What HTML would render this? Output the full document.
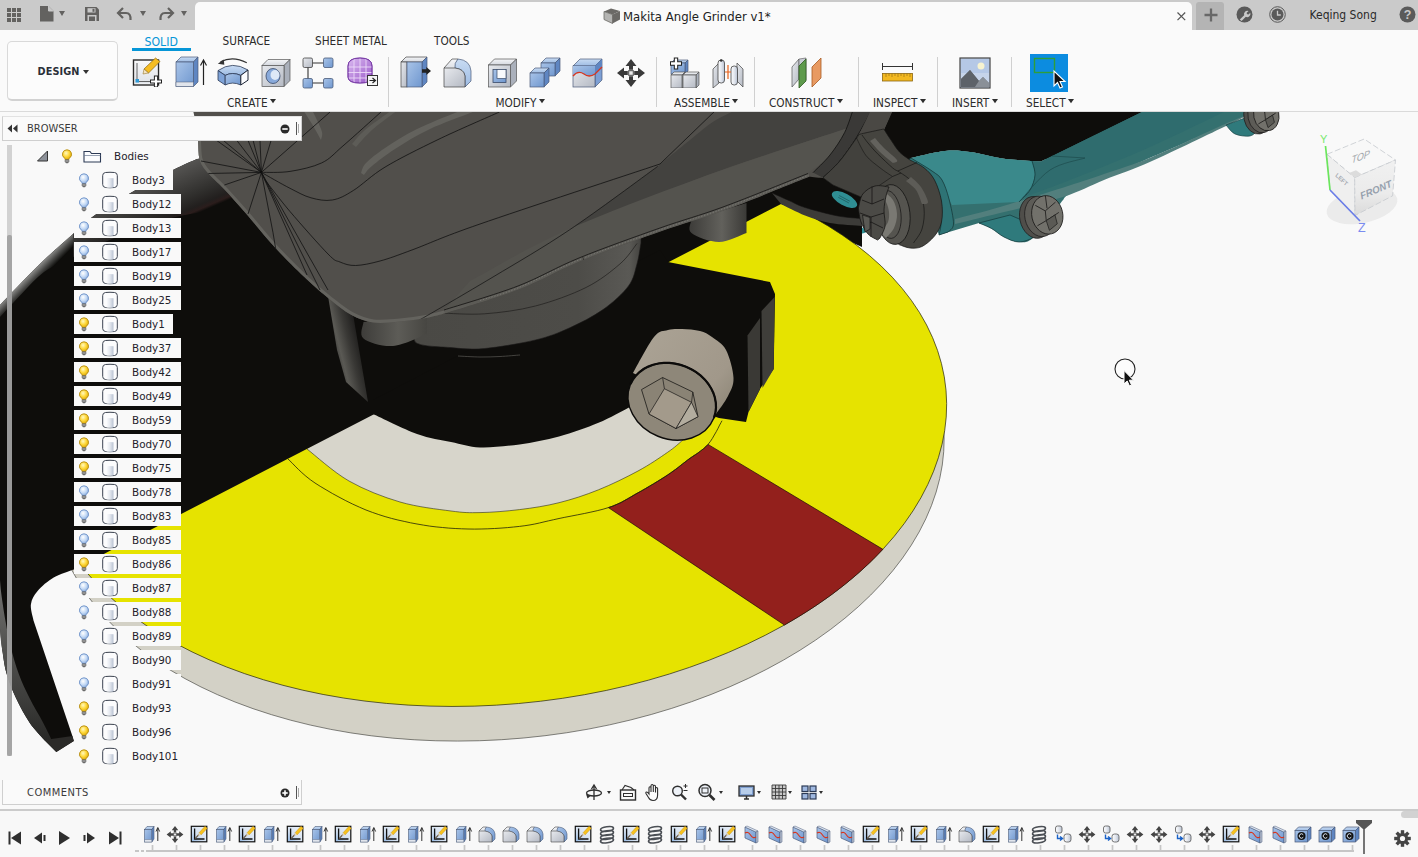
<!DOCTYPE html>
<html lang="en">
<head>
<meta charset="utf-8">
<title>Makita Angle Grinder v1*</title>
<style>
*{box-sizing:border-box;margin:0;padding:0}
html,body{width:1418px;height:857px;overflow:hidden;background:#f9f9f9}
body{position:relative;font-family:"DejaVu Sans Condensed","Liberation Sans",sans-serif;font-size:11px;color:#2e2e2e}
.abs{position:absolute}
#topbar{left:0;top:0;width:1418px;height:30px;background:#cacaca}
#tab{left:195px;top:2px;width:997px;height:28px;background:#fafafa;border-radius:5px 5px 0 0}
#toolbar{left:0;top:30px;width:1418px;height:82px;background:#fafafa}
#tbline{left:0;top:111px;width:1418px;height:1px;background:#dadada}
#design{left:7px;top:41px;width:111px;height:60px;border:1px solid #d9d9d9;border-bottom:2px solid #d2d2d2;border-radius:5px;background:#fcfcfc}
.t{position:absolute;white-space:nowrap;line-height:1}
.tabl{font-size:11.7px;top:36.5px;color:#2b2b2b}
.grp{font-size:11.7px;top:98px;color:#2b2b2b;height:12px;line-height:12px}
.dd{display:inline-block;margin-left:2.5px;vertical-align:3.4px}
.sep{position:absolute;top:57px;width:1px;height:50px;background:#d0d0d0}
.tri{position:absolute;width:0;height:0;border-left:2.8px solid transparent;border-right:2.8px solid transparent;border-top:3.8px solid #333}
#canvas{left:0;top:112px;width:1418px;height:697px;overflow:hidden}
#bhead{left:2px;top:116px;width:300px;height:25px;background:#fafafa;border:1px solid #cfcfcf;border-top-color:#e2e2e2}
#chead{left:2px;top:780px;width:300px;height:25px;background:#fafafa;border:1px solid #cfcfcf;border-top:none}
.row{position:absolute;left:74px;height:20px;background:#f9f9f9}
.lbl{position:absolute;left:132px;font-family:"DejaVu Sans","Liberation Sans",sans-serif;font-size:10.4px;color:#1f222b;line-height:1;white-space:nowrap}
#tline{left:0;top:809px;width:1418px;height:2px;background:#cbcbcb}
#timeline{left:0;top:811px;width:1418px;height:47px;background:#f8f8f8}
</style>
</head>
<body>
<svg width="0" height="0" style="position:absolute"><defs>
<linearGradient id="bl" x1="0" y1="0" x2="1" y2="1"><stop offset="0" stop-color="#a9c4e8"/><stop offset="1" stop-color="#6f97cf"/></linearGradient>
<linearGradient id="blt" x1="0" y1="0" x2="0" y2="1"><stop offset="0" stop-color="#c9dcf3"/><stop offset="1" stop-color="#9dbbe3"/></linearGradient>
<linearGradient id="gy" x1="0" y1="0" x2="1" y2="1"><stop offset="0" stop-color="#e8eaee"/><stop offset="1" stop-color="#b4b9c3"/></linearGradient>
<linearGradient id="gyt" x1="0" y1="0" x2="0" y2="1"><stop offset="0" stop-color="#f4f5f7"/><stop offset="1" stop-color="#d4d8df"/></linearGradient>
<linearGradient id="cyl" x1="0" y1="0" x2="1" y2="0"><stop offset="0" stop-color="#fdfdfe"/><stop offset=".5" stop-color="#e4e8ef"/><stop offset="1" stop-color="#b9c2d2"/></linearGradient>
<radialGradient id="bulbY" cx=".4" cy=".35" r=".7"><stop offset="0" stop-color="#fff9c0"/><stop offset=".5" stop-color="#ffd83a"/><stop offset="1" stop-color="#d9a400"/></radialGradient>
<radialGradient id="bulbB" cx=".4" cy=".35" r=".7"><stop offset="0" stop-color="#ffffff"/><stop offset=".55" stop-color="#c3d9f5"/><stop offset="1" stop-color="#7fa3d8"/></radialGradient>
<linearGradient id="skf" x1="1" y1="0" x2="0" y2="1"><stop offset="0" stop-color="#f1f5fa"/><stop offset=".6" stop-color="#d3e0f0"/><stop offset="1" stop-color="#8db4e2"/></linearGradient>
<linearGradient id="pur" x1="0" y1="0" x2="1" y2="1"><stop offset="0" stop-color="#d9b8f0"/><stop offset="1" stop-color="#9b59c9"/></linearGradient>
<symbol id="iBulbY" viewBox="0 0 12 15"><path d="M6 .8a4.500 4.500 0 0 0-2.600 8.200c.5.400.7.900.7 1.600h3.800c0-.7.200-1.200.7-1.600A4.500 4.500 0 0 0 6 .8z" fill="url(#bulbY)" stroke="#b48a10" stroke-width=".9"/><rect x="4.100" y="10.700" width="3.800" height="2.600" rx=".6" fill="#9a9a9a" stroke="#555" stroke-width=".6"/><rect x="4.900" y="13.300" width="2.200" height=".9" fill="#555"/></symbol>
<symbol id="iBulbB" viewBox="0 0 12 15"><path d="M6 .8a4.500 4.500 0 0 0-2.600 8.200c.5.400.7.900.7 1.600h3.800c0-.7.200-1.200.7-1.600A4.500 4.500 0 0 0 6 .8z" fill="url(#bulbB)" stroke="#6a8fc6" stroke-width=".9"/><rect x="4.100" y="10.700" width="3.800" height="2.600" rx=".6" fill="#9a9a9a" stroke="#555" stroke-width=".6"/><rect x="4.900" y="13.300" width="2.200" height=".9" fill="#555"/></symbol>
<symbol id="iBody" viewBox="0 0 18 18"><path d="M1.700 4.500Q1.700 1.800 4.500 1.500Q9 1 13.500 1.500Q16.300 1.800 16.300 4.500V13.500Q16.300 16.200 13.500 16.500Q9 17 4.500 16.500Q1.700 16.200 1.700 13.500Z" fill="#fcfcfd" stroke="#3c4350" stroke-width="1"/><path d="M5.300 7.300Q9 6.500 12.500 7.300V16.500Q9 17 5.300 16.500Z" fill="url(#cyl)"/></symbol>
<symbol id="iExt" viewBox="0 0 22 20"><path d="M3 5L6 1.500H14L11.500 5Z" fill="url(#blt)" stroke="#4a5a78" stroke-width=".7"/><path d="M11.500 5L14 1.500V14L11.500 17.500Z" fill="#5f86c2" stroke="#4a5a78" stroke-width=".7"/><rect x="3" y="5" width="8.500" height="12.500" fill="url(#bl)" stroke="#4a5a78" stroke-width=".7"/><path d="M3 15h8.500v2.500H3z" fill="#d7dce6" stroke="#4a5a78" stroke-width=".5"/><path d="M18 17.500V3M15.800 6L18 2.500L20.200 6" stroke="#222" stroke-width="1.100" fill="none"/></symbol>
<symbol id="iSk" viewBox="0 0 20 20"><rect x="1.500" y="2" width="16.500" height="16.500" fill="#fdfdfd" stroke="#1d1d1d" stroke-width="1.400"/><path d="M4.500 15.500L12.500 7.500M4.500 15.500V9.500M4.500 15.500H10.500" stroke="#222" stroke-width="1.300" fill="none"/><path d="M10 8L16.500 1.500L19 3.500L12.500 10.500Z" fill="#f5b81c" stroke="#a26f00" stroke-width=".5"/><rect x="2.200" y="2.700" width="6" height="6" fill="#9fc1ea" opacity=".0"/></symbol>
</defs></svg>
<svg class="abs" style="left:0;top:112px" width="1418" height="697" viewBox="0 112 1418 697">
<defs>
<linearGradient id="gRim" gradientUnits="userSpaceOnUse" x1="190" y1="162" x2="210" y2="208"><stop offset="0" stop-color="#555452"/><stop offset=".3" stop-color="#434240"/><stop offset=".62" stop-color="#302f2d"/><stop offset=".86" stop-color="#221f1e"/><stop offset=".94" stop-color="#2b1d1c"/><stop offset="1" stop-color="#0e0d0b"/></linearGradient>
<linearGradient id="gRimL" gradientUnits="userSpaceOnUse" x1="33" y1="271" x2="41" y2="279"><stop offset="0" stop-color="#8c8c8a"/><stop offset=".5" stop-color="#4a4a48"/><stop offset="1" stop-color="#0e0d0b"/></linearGradient>
<linearGradient id="gStrap" gradientUnits="userSpaceOnUse" x1="0" y1="585" x2="0" y2="745"><stop offset="0" stop-color="#727270"/><stop offset=".35" stop-color="#555553"/><stop offset=".7" stop-color="#3e3e3c"/><stop offset="1" stop-color="#262624"/></linearGradient>
<linearGradient id="gNeck" gradientUnits="userSpaceOnUse" x1="420" y1="300" x2="645" y2="300"><stop offset="0" stop-color="#4a4945"/><stop offset=".7" stop-color="#4d4c48"/><stop offset=".93" stop-color="#5a5955"/><stop offset="1" stop-color="#3c3b38"/></linearGradient>
<linearGradient id="gBossL" gradientUnits="userSpaceOnUse" x1="363" y1="0" x2="427" y2="0"><stop offset="0" stop-color="#3f3e3b"/><stop offset=".55" stop-color="#5d5c57"/><stop offset="1" stop-color="#474642"/></linearGradient>
<linearGradient id="gBossR" gradientUnits="userSpaceOnUse" x1="691" y1="0" x2="747" y2="0"><stop offset="0" stop-color="#3f3e3b"/><stop offset=".55" stop-color="#62615c"/><stop offset="1" stop-color="#3a3936"/></linearGradient>
<linearGradient id="gPil" gradientUnits="userSpaceOnUse" x1="330" y1="350" x2="362" y2="342"><stop offset="0" stop-color="#2c2b29"/><stop offset=".3" stop-color="#5a5954"/><stop offset=".6" stop-color="#3a3936"/><stop offset="1" stop-color="#1a1918"/></linearGradient>
<linearGradient id="gBolt" gradientUnits="userSpaceOnUse" x1="650" y1="330" x2="735" y2="400"><stop offset="0" stop-color="#aaa294"/><stop offset=".75" stop-color="#a1988a"/><stop offset="1" stop-color="#8f8879"/></linearGradient>
<radialGradient id="gScrew" cx=".45" cy=".45" r=".6"><stop offset="0" stop-color="#7b7973"/><stop offset="1" stop-color="#4a4945"/></radialGradient>
<linearGradient id="gCubeT" x1="0" y1="0" x2="1" y2="1"><stop offset="0" stop-color="#fbfbfb"/><stop offset="1" stop-color="#e9e9e9"/></linearGradient>
</defs>
<rect x="0" y="112" width="1418" height="697" fill="#f9f9f9"/>
<path d="M850 110C899.3 110 1114.2 101.4 1146 110C1177.8 118.6 1058.5 152.9 1041 161.5C1034.8 161 1015.8 160.3 1004 158.7C992.2 157.1 979.8 153.3 970 152C960.2 150.7 954.8 150 945 151C935.2 152 916.7 156.8 911 158L905 170L880 150L860 130Z" fill="#0e0d0b"/>
<path d="M911 158C916.7 156.8 935.2 152 945 151C954.8 150 960.2 150.7 970 152C979.8 153.3 992.2 157.1 1004 158.7C1015.8 160.3 1034.8 161 1041 161.5L1146 110L1283 110L1243 117C1240.2 118.3 1242.7 117.7 1226 125C1209.3 132.3 1168.2 150 1143 161C1117.8 172 1088.3 184.5 1075 191C1061.7 197.5 1065 198.5 1063 200C1058.2 206.2 1041.3 230 1034 237C1026.7 244 1024 242 1019 242C1014 242 1008.6 239.2 1004 237C999.4 234.8 995.7 230.8 991.5 228.5C987.3 226.2 981.1 223.9 979 223L939 235Z" fill="#34706f"/>
<path d="M911 158C916.7 156.8 935.2 152 945 151C954.8 150 960.2 150.7 970 152C979.8 153.3 993.7 157.2 1004 158.7C1014.3 160.2 1027.3 160.6 1032 161C1032.5 163.3 1035.3 170.2 1035 175C1034.7 179.8 1032.7 185.5 1030 190C1027.3 194.5 1020.8 200 1019 202L952 205C951.5 204 950.7 203.2 949 199C947.3 194.8 944.8 184.7 942 180C939.2 175.3 937.2 174.7 932 171C926.8 167.3 914.5 160.2 911 158Z" fill="#3a898b"/>
<path d="M1032 161L1041 161.5L1146 110L1228 110C1215 116.2 1175.5 135.7 1150 147C1124.5 158.3 1096.3 169.5 1075 178C1053.7 186.5 1030.8 194.7 1022 198C1023.3 196.7 1027.8 193.8 1030 190C1032.2 186.2 1034.7 179.8 1035 175C1035.3 170.2 1032.5 163.3 1032 161Z" fill="#2f6c6e"/>
<path d="M1259 110C1253.2 112.4 1241.8 116.7 1224 124.5C1206.2 132.3 1172 148.8 1152 157C1132 165.2 1118 169.2 1104 174C1090 178.8 1085.3 180.5 1068 186C1050.7 191.5 1018.8 201.5 1000 207C981.2 212.5 962.5 217 955 219L955 224C962.5 222.2 982 217.5 1000 213C1018 208.5 1045.7 202.5 1063 197C1080.3 191.5 1089.2 186 1104 180C1118.8 174 1131.7 170 1152 161C1172.3 152 1213.7 131.8 1226 126L1243 117.5L1283 110Z" fill="#527f7d"/>
<path d="M1032 161C1032.5 163.3 1035.3 170.2 1035 175C1034.7 179.8 1032.7 185.5 1030 190C1027.3 194.5 1020.8 200 1019 202" fill="none" stroke="#143a3c" stroke-width="0.8"/>
<path d="M1019 202C1024.2 196.7 1039 177.3 1050 170C1061 162.7 1079.2 160 1085 158L1052 156" fill="none" stroke="#1d4a4c" stroke-width="0.7"/>
<path d="M911 158C914.5 160.2 926.8 167.3 932 171C937.2 174.7 939.2 175.3 942 180C944.8 184.7 947.1 191.7 949 199C950.9 206.3 953.7 218.5 953.5 224C953.3 229.5 948.9 230.7 948 232L939 235C939.3 232.8 941.2 228 941 222C940.8 216 939.8 206.3 938 199C936.2 191.7 933.3 183.5 930 178C926.7 172.5 921.7 169 918 166C914.3 163 909.7 161 908 160Z" fill="#2e7375" stroke="#123234" stroke-width="0.7"/>
<path d="M979 223C981.1 223.9 987.3 226.2 991.5 228.5C995.7 230.8 999.4 234.8 1004 237C1008.6 239.2 1014 242 1019 242C1024 242 1030.5 239.3 1034 237C1037.5 234.7 1039 229.5 1040 228L1010 215Z" fill="#2f7a7c" stroke="#14393b" stroke-width="0.7"/>
<path d="M1226 125C1227.5 126.5 1231 132.2 1235 134C1239 135.8 1246.2 136.7 1250 136C1253.8 135.3 1256.7 131 1258 130L1250 116Z" fill="#2f7a7c" stroke="#14393b" stroke-width="0.6"/>
<g transform="translate(1042 216) rotate(-12)"><ellipse cx="-6.9" cy="0" rx="15.5" ry="21.1" fill="#4f4e4a" stroke="#1c1b1a" stroke-width=".7"/><ellipse cx="-1.7" cy="0" rx="15.5" ry="20.4" fill="#5d5c57" stroke="#1c1b1a" stroke-width=".7"/><ellipse cx="5.4" cy="0" rx="15.5" ry="19.4" fill="#72716b" stroke="#1c1b1a" stroke-width=".8"/><path d="M-4.3 -11.8L4.3 -4.3L16.1 -10.8M4.3 -4.3L3.2 5.4M7.5 -18.9L6.5 -6.5M-6.5 8.6L3.2 5.4L17.2 0" stroke="#1f1e1d" stroke-width=".8" fill="none"/><path d="M3.2 5.4L12.9 1.7L13.3 10.8L4.3 15.5Z" fill="#5b5a55" stroke="#1f1e1d" stroke-width=".7"/></g>
<g transform="translate(1262 116) rotate(-12)"><ellipse cx="-5.6" cy="0" rx="12.6" ry="17.1" fill="#4f4e4a" stroke="#1c1b1a" stroke-width=".7"/><ellipse cx="-1.4" cy="0" rx="12.6" ry="16.6" fill="#5d5c57" stroke="#1c1b1a" stroke-width=".7"/><ellipse cx="4.4" cy="0" rx="12.6" ry="15.8" fill="#72716b" stroke="#1c1b1a" stroke-width=".8"/><path d="M-3.5 -9.6L3.5 -3.5L13.1 -8.8M3.5 -3.5L2.6 4.4M6.1 -15.4L5.2 -5.2M-5.2 7L2.6 4.4L14 0" stroke="#1f1e1d" stroke-width=".8" fill="none"/><path d="M2.6 4.4L10.5 1.4L10.8 8.8L3.5 12.6Z" fill="#5b5a55" stroke="#1f1e1d" stroke-width=".7"/></g>
<ellipse cx="847" cy="227.500" rx="19.500" ry="5" transform="rotate(12 847 227.500)" fill="#2f8e93"/>
<path d="M800 210L862 225L862 247L838 236L805 218Z" fill="#0e0d0b"/>
<ellipse cx="498.2" cy="465.3" rx="447.1" ry="273.9" transform="rotate(-5.23 498.2 465.3)" fill="#d3d1c6" stroke="#3a3a36" stroke-width=".6"/>
<ellipse cx="494.3" cy="430.3" rx="453.5" ry="274.3" transform="rotate(-5.08 494.3 430.3)" fill="#e6e300" stroke="#2a2a10" stroke-width=".7"/>
<path d="M307 449C314 454.3 333.5 472.2 349 481C364.5 489.8 383 497 400 502C417 507 437.7 509.2 451 511C464.3 512.8 468.6 512.8 480 512.6C491.4 512.4 506.3 511.2 519.5 509.6C532.7 508 545.8 506 559 502.7C572.2 499.4 585.3 495.1 598.5 489.8C611.7 484.5 626.5 477.2 638 471C649.5 464.8 660 457.6 667.6 452.3C675.2 447.1 678 444.2 683.4 439.5C688.8 434.8 694.7 429.2 700 424C705.3 418.8 712.5 410.7 715 408L715 395L640 395L373 405L307 449Z" fill="#d7d5cb"/>
<path d="M307 449C314 454.3 333.5 472.2 349 481C364.5 489.8 383 497 400 502C417 507 437.7 509.2 451 511C464.3 512.8 468.6 512.8 480 512.6C491.4 512.4 506.3 511.2 519.5 509.6C532.7 508 545.8 506 559 502.7C572.2 499.4 585.3 495.1 598.5 489.8C611.7 484.5 626.5 477.2 638 471C649.5 464.8 660 457.6 667.6 452.3C675.2 447.1 678 444.2 683.4 439.5C688.8 434.8 694.7 429.2 700 424C705.3 418.8 712.5 410.7 715 408" fill="none" stroke="#2a2a20" stroke-width="0.6"/>
<path d="M608.4 507.6L613 506L617.2 504.2L621 502.5L624.4 500.6L627.8 498.7L631.1 496.8L634.4 494.8L638 492.8L641.8 490.7L645.6 488.5L649.5 486.2L653.4 483.9L657.2 481.6L660.9 479.3L664.4 477.1L667.6 475L670.5 473L673.2 471.1L675.7 469.3L678.1 467.5L680.3 465.7L682.6 463.9L685 462.1L687.4 460.2L690 458.3L692.6 456.5L695.4 454.7L698.1 452.9L700.7 450.9L703.3 448.9L705.7 446.8L708 444.4L882.9 549.3L877.9 554.5L872.8 559.7L867.5 564.8L862 569.8L856.4 574.8L850.6 579.7L844.6 584.6L838.5 589.4L832.3 594.1L825.9 598.7L819.3 603.3L812.6 607.8L805.8 612.2L798.8 616.5L791.7 620.8L784.4 625Z" fill="#93201c" stroke="#1e0a08" stroke-width=".7"/>
<path d="M288 459L289.9 460.8L292.3 463.2L295.1 466.1L298.3 469.3L301.9 472.7L305.9 476.2L310.3 479.7L315 483L320.2 486.3L326.1 489.8L332.4 493.5L339 497.1L345.8 500.7L352.7 504.1L359.5 507.2L366 510L372.4 512.4L378.8 514.6L385.1 516.6L391.5 518.4L397.9 520L404.2 521.4L410.6 522.8L417 524L423.4 525.1L429.7 526.1L436.1 526.9L442.5 527.5L448.8 528.1L455.2 528.5L461.6 528.8L468 529L474.5 529.1L481.1 529L487.8 528.8L494.5 528.5L501 528.1L507.5 527.6L513.6 527L519.5 526.4L524.9 525.7L530 524.9L534.8 524L539.4 523L544 521.9L548.7 520.8L553.7 519.7L559 518.5L564.8 517.3L571.1 516.1L577.7 514.8L584.3 513.5L590.9 512.1L597.2 510.7L603.1 509.2L608.4 507.6L613 506L617.2 504.2L621 502.5L624.4 500.6L627.8 498.7L631.1 496.8L634.4 494.8L638 492.8L641.8 490.7L645.6 488.5L649.5 486.2L653.4 483.9L657.2 481.6L660.9 479.3L664.4 477.1L667.6 475L670.5 473L673.2 471.1L675.7 469.3L678.1 467.5L680.3 465.7L682.6 463.9L685 462.1L687.4 460.2L690 458.3L692.6 456.5L695.4 454.7L698.1 452.9L700.7 450.9L703.3 448.9L705.7 446.8L708 444.4L710.2 441.7L712.3 438.5L714.3 435L716.3 431.6L718.1 428.2L719.6 425.1L721 422.6L722 420.7" fill="none" stroke="#23230a" stroke-width=".8"/>
<path d="M0 305C3.7 301.2 14.7 289.5 22 282C29.3 274.5 35.5 268 44 260C52.5 252 64.8 241.2 73 234C81.2 226.8 83.3 223.4 93 216.5C102.7 209.6 117.7 200.4 131 192.7C144.3 184.9 162 175.6 173 170C184 164.4 193 160.8 197 159L300 140L862 140L862 223C858 222.6 847.5 222.2 838 220.5C828.5 218.8 814.5 215.2 805 212.5C795.5 209.8 785 205.4 781 204L73.8 569.5C70.5 570.9 59.7 574 53.7 577.6C47.7 581.2 41.4 586.5 37.6 591C33.8 595.5 31.6 599.5 30.9 604.4C30.2 609.3 33.1 617.8 33.5 620.5L72.4 736L73.8 741L56.3 752L44.3 740C41.8 737.1 34.2 729.5 29.5 722.5C24.8 715.5 19.8 706.1 16 698C12.2 689.9 8.9 681.5 6.7 674C4.5 666.5 3.8 660.3 2.7 652.7C1.6 645.1 0.5 632.5 0 628.5Z" fill="#0e0d0b"/>
<path d="M772 193C775 194.3 784.5 198.6 790 201C795.5 203.4 797 205 805 207.5C813 210 828.5 214.2 838 216C847.5 217.8 858 218.1 862 218.5L862 226C856.7 225.5 839.5 224.8 830 223C820.5 221.2 813.2 218.7 805 215.5C796.8 212.3 785 205.9 781 204Z" fill="#3c3b38"/>
<path d="M772 193C775 194.3 784.5 198.6 790 201C795.5 203.4 797 205 805 207.5C813 210 828.5 214.2 838 216C847.5 217.8 858 218.1 862 218.5" fill="none" stroke="#141312" stroke-width="0.6"/>
<g transform="rotate(28 844.5 199.5)"><ellipse cx="844.5" cy="199.5" rx="14" ry="6" fill="#2f8e93"/><path d="M838 198.500H850M838 200.500H850" stroke="#1d5a5e" stroke-width=".7"/></g>
<path d="M73 234C76.3 231.1 83.3 223.4 93 216.5C102.7 209.6 117.7 200.4 131 192.7C144.3 184.9 162 175.6 173 170C184 164.4 193 160.8 197 159L215 158L245 206C234.2 207.7 199 211.8 180 216C161 220.2 148.8 224.2 131 231C113.2 237.8 82.7 252.7 73 257Z" fill="url(#gRim)"/>
<path d="M0 305C3.7 301.2 14.7 289.5 22 282C29.3 274.5 35.5 268 44 260C52.5 252 68.2 238.3 73 234L73 257C68.2 259.5 52.5 265.9 44 272C35.5 278.1 29.3 286 22 293.5C14.7 301 3.7 313.1 0 317Z" fill="url(#gRimL)"/>
<path d="M0 580C0 588.1 -0.5 616.4 0 628.5C0.5 640.6 1.6 645.1 2.7 652.7C3.8 660.3 4.5 666.5 6.7 674C8.9 681.5 12.2 689.9 16 698C19.8 706.1 24.8 715.5 29.5 722.5C34.2 729.5 41.8 737.1 44.3 740L53.7 744C51.9 740.4 47 730.2 43 722.5C39 714.8 33.5 706.1 29.5 698C25.5 689.9 21.9 682.5 18.8 674C15.7 665.5 12.9 655.9 10.7 647C8.5 638.1 7 629.4 5.4 620.5C3.8 611.6 2.2 600.5 1.3 593.7C0.4 587 0.2 582.3 0 580Z" fill="url(#gStrap)"/>
<path d="M44.3 740L72.4 736L73.8 741L56.3 752Z" fill="#2b2a28"/>
<path d="M373 414C380.3 417.3 404 429.3 417 434C430 438.7 440.5 439.8 451 442C461.5 444.2 468.6 447 480 447.4C491.4 447.8 506.3 446.2 519.5 444.4C532.7 442.6 545.8 440.1 559 436.5C572.2 432.9 587 427.5 598.5 422.7C610 417.9 623.1 410.4 628 407.9L650 395L719 418L746 422L748.5 412L760.6 388L773.7 369L775 294L770 282L668 262L660 250L373 400Z" fill="#0e0d0b"/>
<path d="M761.5 311L774.6 297L773.7 369L762.5 388Z" fill="#3f3e3a"/>
<path d="M747.5 335.5L760 318L760 389L748.5 412Z" fill="#3a3935"/>
<path d="M328 296L353 314L368 402L346 382L337 350Z" fill="url(#gPil)"/>
<path d="M426 317C424.2 321.1 410.9 336.6 415 341.7C419.1 346.8 439.2 346.5 450.8 347.6C462.4 348.7 470.5 349.8 484.6 348.5C498.7 347.2 521.3 343.4 535.4 340C549.5 336.6 558 333.1 569.3 328C580.6 322.9 593.1 316.6 603 309.6C612.9 302.6 622.8 293.5 628.5 285.9C634.2 278.3 634.9 271 637 263.9C639.1 256.8 640.3 246.5 641 243L641 232Z" fill="url(#gNeck)" stroke="#1b1a19" stroke-width="0.6"/>
<path d="M440.6 313C447.9 313.1 468.8 315 484.6 313.8C500.4 312.6 518.5 310.4 535.4 306C552.3 301.6 571.9 294.5 586 287.5C600.1 280.5 611.5 271.2 620 263.9C628.5 256.6 634.2 246.9 637 243.5" fill="none" stroke="#1f1e1c" stroke-width="0.7"/>
<path d="M458 356C461.7 356.2 473 356.9 480 357C487 357.1 493.3 356.8 500 356.5C506.7 356.2 516.7 355.2 520 355" fill="none" stroke="#5a5955" stroke-width="0.7"/>
<path d="M363.5 322C363.5 324.8 358.6 334.5 363.5 338.5C368.4 342.5 382.4 346.8 393 346C403.6 345.2 421.3 336 427 334L427 316Z" fill="url(#gBossL)"/>
<path d="M691.5 220C691.5 222.2 686.9 229.3 691.5 233C696.1 236.7 709.8 242 719 242C728.2 242 741.9 234.5 746.5 233L746.5 203Z" fill="url(#gBossR)"/>
<clipPath id="cBody"><path d="M193 110C193.5 112.5 195.2 119.8 196 125C196.8 130.2 197.4 135.2 198 141C198.6 146.8 198.1 154.4 199.6 159.6C201.1 164.8 202.9 167.1 207 172C211.1 176.9 217.5 182.1 224 189C230.5 195.9 237.4 203.7 246 213.5C254.6 223.3 265.3 237 275.5 248C285.7 259 298 271.1 307 279.6C316 288.1 322 293.1 329.4 299C336.8 304.9 344.1 311.1 351.5 315C358.9 318.9 365.4 321.4 373.5 322.5C381.6 323.6 391.2 322.2 400 321.5C408.8 320.8 418.5 319.4 426 318C433.5 316.6 442 314.1 445.2 313.3C457.5 309.3 496.7 298 519.2 289.3C541.7 280.6 556.5 271 580.2 261.3C603.9 251.6 637.2 239.8 661.2 231.3C685.2 222.8 699.5 219.4 724.2 210.3C748.9 201.2 795 182.4 809.2 176.8C812.7 177 823.2 178.8 830 178C836.8 177.2 843.3 175 850 172C856.7 169 866.7 162 870 160L884 130L893 110Z"/></clipPath>
<path d="M193 110C193.5 112.5 195.2 119.8 196 125C196.8 130.2 197.4 135.2 198 141C198.6 146.8 198.1 154.4 199.6 159.6C201.1 164.8 202.9 167.1 207 172C211.1 176.9 217.5 182.1 224 189C230.5 195.9 237.4 203.7 246 213.5C254.6 223.3 265.3 237 275.5 248C285.7 259 298 271.1 307 279.6C316 288.1 322 293.1 329.4 299C336.8 304.9 344.1 311.1 351.5 315C358.9 318.9 365.4 321.4 373.5 322.5C381.6 323.6 391.2 322.2 400 321.5C408.8 320.8 418.5 319.4 426 318C433.5 316.6 442 314.1 445.2 313.3C457.5 309.3 496.7 298 519.2 289.3C541.7 280.6 556.5 271 580.2 261.3C603.9 251.6 637.2 239.8 661.2 231.3C685.2 222.8 699.5 219.4 724.2 210.3C748.9 201.2 795 182.4 809.2 176.8C812.7 177 823.2 178.8 830 178C836.8 177.2 843.3 175 850 172C856.7 169 866.7 162 870 160L884 130L893 110Z" fill="#514f4b"/>
<g clip-path="url(#cBody)">
<path d="M198 141C198.3 144.1 198.1 154.4 199.6 159.6C201.1 164.8 202.9 167.1 207 172C211.1 176.9 217.5 182.1 224 189C230.5 195.9 237.4 203.7 246 213.5C254.6 223.3 265.3 237 275.5 248C285.7 259 298 271.1 307 279.6C316 288.1 322 293.1 329.4 299C336.8 304.9 344.1 311.1 351.5 315C358.9 318.9 365.4 321.4 373.5 322.5C381.6 323.6 391.2 322.2 400 321.5C408.8 320.8 418.5 319.4 426 318C433.5 316.6 442 314.1 445.2 313.3" fill="none" stroke="#64635e" stroke-width="6"/>
<path d="M657.7 166.4C663.1 162 680.6 147.5 690 140C699.4 132.5 705.7 126.6 714 121.3C722.3 116 735.7 110.2 740 108L885 108L848 128C823.3 136.3 743.8 161.3 700 178C656.2 194.7 604.2 219.7 585 228L562 236Z" fill="#43423f"/>
<path d="M470 281C485.8 272.7 526.3 248.2 564.6 231C602.9 213.8 652.8 195.2 700 178C747.2 160.8 823.3 136.3 848 128L847 146L807 173.5C793 179.1 747.5 197.9 723 207C698.5 216.1 684 219.5 660 228C636 236.5 602.7 248.3 579 258C555.3 267.7 540.5 277.3 518 286C495.5 294.7 456.3 306 444 310Z" fill="#54534e"/>
<path d="M444 310C456.3 306 495.5 294.7 518 286C540.5 277.3 555.3 267.7 579 258C602.7 248.3 636 236.5 660 228C684 219.5 698.3 216.1 723 207C747.7 197.9 793.8 179.1 808 173.5L809.2 176.8C795 182.4 748.9 201.2 724.2 210.3C699.5 219.4 685.2 222.8 661.2 231.3C637.2 239.8 603.9 251.6 580.2 261.3C556.5 271 541.7 280.6 519.2 289.3C496.7 298 457.5 309.3 445.2 313.3Z" fill="#5c5b56"/>
<path d="M444 310C456.3 306 495.5 294.7 518 286C540.5 277.3 555.3 267.7 579 258C602.7 248.3 636 236.5 660 228C684 219.5 698.3 216.1 723 207C747.7 197.9 793.8 179.1 808 173.5" fill="none" stroke="#1b1a19" stroke-width="0.9"/>
<path d="M480 300.5C486.4 298.4 502 294.4 518.6 287.6C535.2 280.8 555.9 269.3 579.6 259.6C603.3 249.9 636.6 238.1 660.6 229.6C684.6 221.1 698.9 217.7 723.6 208.6C748.3 199.5 794.4 180.7 808.6 175.1" fill="none" stroke="#8b8a84" stroke-width="0.6" stroke-dasharray="1.500 1.500"/>
<path d="M582.8 257C582.9 257.8 584 260.4 583.5 262C583 263.6 580.2 265.8 579.5 266.5" fill="none" stroke="#1b1a19" stroke-width="0.7"/>
<path d="M853 110C851.6 113.8 848.4 125.1 844.6 132.6C840.8 140.1 835.3 148.3 830 155C824.7 161.7 815.8 169.7 813 172.6L823 177.7C825.7 175.1 834.5 167.1 839 162C843.5 156.9 846.9 151.9 850.3 147C853.7 142.1 855.7 138.8 859.3 132.6C862.9 126.4 869.6 113.8 871.7 110Z" fill="#3a3937"/>
<path d="M853 110C851.6 113.8 848.4 125.1 844.6 132.6C840.8 140.1 835.3 148.3 830 155C824.7 161.7 815.8 169.7 813 172.6" fill="none" stroke="#121110" stroke-width="0.8"/>
<path d="M871.7 110C869.6 113.8 862.9 126.4 859.3 132.6C855.7 138.8 853.7 142.1 850.3 147C846.9 151.9 843.5 156.9 839 162C834.5 167.1 825.7 175.1 823 177.7" fill="none" stroke="#121110" stroke-width="0.8"/>
<path d="M871.7 108L859.3 134.3L884 130.3L893 108Z" fill="#4a4844"/>
<path d="M303 110C304.5 112.3 309 119 312 124C315 129 319.5 137.3 321 140C321.2 138.7 322.8 135.7 322 132C321.2 128.3 317.7 121.7 316 118C314.3 114.3 312.7 111.3 312 110Z" fill="#64635e"/>
<path d="M352 144C354.2 141.7 358.3 135.7 365 130C371.7 124.3 387.5 113.3 392 110L398 110C393.7 113.3 379 123.8 372 130C365 136.2 358.7 144.2 356 147Z" fill="#5d5c57"/>
<path d="M361 173C361.8 171.3 362 167.2 366 163C370 158.8 376.5 153.7 385 148C393.5 142.3 404.2 135.3 417 129C429.8 122.7 454.5 113.2 462 110L478 110C470 113.2 443.8 122.5 430 129C416.2 135.5 404.7 142.8 395 149C385.3 155.2 377.2 161.7 372 166C366.8 170.3 365.3 173.5 364 175Z" fill="#63625d"/>
<path d="M261.4 172.4L217 140.7M261.4 172.4L205 125M261.4 172.4L237 140.7M261.4 172.4L247 138M261.4 172.4L253 140M261.4 172.4L260 140.7M261.4 172.4L271 140.7M261.4 172.4L330 112M261.4 172.4L201 161M261.4 172.4L207.5 173.5M261.4 172.4L224.4 185M261.4 172.4L248 214M261.4 172.4L273 232.7M261.4 172.4L307 275M261.4 172.4L320 290M261.4 172.4L328 290" stroke="#111" stroke-width=".8" fill="none"/>
<path d="M273 232.7L276 250.7" fill="none" stroke="#111" stroke-width="0.8"/>
<path d="M261.4 172.4C266.2 172.2 279.9 173 290 171.4C300.1 169.8 312.9 167.1 321.7 162.9C330.5 158.7 333 154.5 342.9 146C352.8 137.5 374.6 117.7 381 112" fill="none" stroke="#111" stroke-width="0.8"/>
<path d="M261.4 172.4C266.2 175.1 281.7 184.1 290 188.3C298.3 192.5 303.9 195.9 311 197.8C318.1 199.8 325.2 201.2 332.3 200C339.4 198.8 344.7 195.9 353.5 190.4C362.3 184.9 371.1 175.5 385.2 167C399.3 158.5 419 148.8 438 139.6C457 130.4 489.2 116.6 499.4 112" fill="none" stroke="#111" stroke-width="0.8"/>
<path d="M265 180C269.2 185.2 279.5 199.2 290 211.5C300.5 223.8 319.7 245.6 328 254C336.3 262.4 335.4 260.1 340 262C344.6 263.9 348.9 265.7 355.6 265.5C362.3 265.3 370.4 263.6 380 261C389.6 258.4 396.3 255.8 413 249.6C429.7 243.4 438.8 238.3 480 224C521.2 209.7 630 174 660 164L716 110" fill="none" stroke="#111" stroke-width="0.8"/>
<path d="M405 327C407 326.1 402.3 329.7 417 321.4C431.7 313.1 467.6 292.2 493 277C518.4 261.8 541.8 248.4 569.3 230C596.8 211.6 643 177 657.7 166.4" fill="none" stroke="#111" stroke-width="0.7"/>
</g>
<path d="M633 373C636.5 367 648.2 344.2 654 337C659.8 329.8 663.3 331.3 668 330C672.7 328.7 676.7 328.8 682 329C687.3 329.2 695 329.7 700 331C705 332.3 707.7 333.8 712 337C716.3 340.2 722.4 343.2 726 350C729.6 356.8 733.2 370.3 733.5 378C733.8 385.7 730.9 390 728 396C725.1 402 718 411 716 414Z" fill="url(#gBolt)"/>
<ellipse cx="672" cy="401.5" rx="45" ry="37.5" transform="rotate(22 672 401.5)" fill="#8e8779" stroke="#0c0b0a" stroke-width="1.4"/>
<path d="M630.8 383.4L633.1 379.2L636.1 375.4L639.6 372L643.7 369L648.2 366.6L653.1 364.8L658.4 363.5L663.8 362.9L669.4 362.9L675 363.6L680.6 364.9L686 366.7L691.3 369.2L696.2 372.1L700.7 375.6L704.7 379.4L708.2 383.7L711.1 388.2L713.4 392.9L714.9 397.8L715.8 402.8L716 407.7L715.4 412.5L714.2 417.1" fill="none" stroke="#0c0b0a" stroke-width="2.2" stroke-linecap="round"/>
<path d="M662.6 377.5L692.8 392L698 416.7L676 428.5L649 414L641.5 389.6Z" fill="#8a8375" stroke="#1a1917" stroke-width=".8"/>
<path d="M664.4 388.7L691.5 402.3L676 428.5L649 414Z" fill="#a39a8b" stroke="#1a1917" stroke-width=".7"/>
<path d="M691.5 402.3L698 416.7L676 428.5Z" fill="#b3ad9f" stroke="#1a1917" stroke-width=".7"/>
<path d="M662.6 377.5L664.4 388.7M692.8 392L691.5 402.3" stroke="#1a1917" stroke-width=".7" fill="none"/>
<path d="M823 177.7C825.7 175.1 834.5 167.1 839 162C843.5 156.9 846.9 151.6 850.3 147C853.7 142.4 857.8 136.4 859.3 134.3C860.4 134.1 861.9 133.7 866 132.8C870.1 131.9 880.8 129.6 883.8 129C885 130.8 888.2 136 890.8 139.8C893.4 143.6 896.3 148.6 899.5 152C902.7 155.4 908.2 158.7 910 160C912.3 161.3 919.9 164.5 924 167.8C928.1 171.1 931.6 174.5 934.5 180C937.4 185.5 940.3 194 941.5 201C942.7 208 942.7 216.2 941.5 222C940.3 227.8 937.8 231.9 934.5 236C931.2 240.1 926.1 244.5 922 246.5C917.9 248.5 913.8 248.3 910 248C906.2 247.7 901.2 245.3 899.5 244.8L880 230L861 197L833 185Z" fill="#45443f" stroke="#161514" stroke-width="0.7"/>
<path d="M856.5 138C858.1 140.9 862.1 150.5 866 155.5C869.9 160.5 875.6 164.3 880 167.8C884.4 171.3 890.4 175.1 892.5 176.5L880 185L861 197L833 185L823 177.7C825.7 175.1 834.5 167.1 839 162C843.5 156.9 847.4 151 850.3 147C853.2 143 855.5 139.5 856.5 138Z" fill="#42413d" stroke="#161514" stroke-width="0.6"/>
<path d="M862 135C863 136.3 865.4 139.9 868 143C870.6 146.1 873.5 149.7 877.6 153.8C881.7 157.9 889.1 164.9 892.5 167.8C895.9 170.7 896.9 170.5 897.8 171L917 162.5" fill="none" stroke="#161514" stroke-width="0.7"/>
<path d="M897.8 171C899.5 172.2 904.8 175.3 908 178C911.2 180.7 914.3 182 917 187C919.7 192 923.2 201 924 208C924.8 215 923.8 223.2 922 229C920.2 234.8 914.9 240.7 913.5 243" fill="none" stroke="#161514" stroke-width="0.7"/>
<path d="M892.5 176.5L901 173" fill="none" stroke="#161514" stroke-width="0.7"/>
<path d="M870 141C871.7 142.8 876.2 148.3 880 152C883.8 155.7 890.8 161.2 893 163C893.7 162.5 898.5 162.5 897 160C895.5 157.5 887.7 151.7 884 148C880.3 144.3 876.5 139.7 875 138Z" fill="#63625d"/>
<path d="M906 181C907.7 182.5 913.3 186.2 916 190C918.7 193.8 921 201.7 922 204C923 203.7 928.2 204.8 928 202C927.8 199.2 923.8 191.2 921 187C918.2 182.8 912.7 178.7 911 177Z" fill="#5d5c57"/>
<ellipse cx="893" cy="214.5" rx="17" ry="30" transform="rotate(-6 893 214.5)" fill="#55544f" stroke="#161514" stroke-width=".8"/>
<ellipse cx="889" cy="214.5" rx="12" ry="24" transform="rotate(-6 889 214.5)" fill="none" stroke="#161514" stroke-width=".7"/>
<path d="M884 192C885.5 193.3 890.8 196.3 893 200C895.2 203.7 896.8 209.3 897 214C897.2 218.7 895.8 224 894 228C892.2 232 887.3 236.3 886 238C885.3 237 881.7 234.7 882 232C882.3 229.3 886.8 225.3 888 222C889.2 218.7 889.3 215.3 889 212C888.7 208.7 887.5 204.7 886 202C884.5 199.3 881 197 880 196Z" fill="#7a7973"/>
<path d="M858.4 208C859.1 205.7 860 197.7 862.8 194C865.6 190.3 870.6 187.2 875 186C879.4 184.8 886.7 186.8 889 187C888.5 188.5 886.8 192.2 886 196C885.2 199.8 884.2 205 884 210C883.8 215 885.7 221.3 885 226C884.3 230.7 880.8 236 880 238L877.6 240C876 239 870.8 237 868 234C865.2 231 862.6 226.3 861 222C859.4 217.7 858.8 210.3 858.4 208Z" fill="#4b4a46" stroke="#161514" stroke-width="0.8"/>
<path d="M862 200L872 204L884 199M872 204V186.500M860 213L871 217L884 213M871 217L871 237M863 226L871 222M871 222L883 228" stroke="#161514" stroke-width=".8" fill="none"/>
<path d="M862.500 215L870 217.500L870 229L865 232Z" fill="#5a5954" stroke="#161514" stroke-width=".7"/>
</svg>
<svg class="abs" style="left:1310px;top:125px" width="100" height="115" viewBox="1310 125 100 115"><ellipse cx="1362" cy="206" rx="36" ry="17" fill="#e6e6e6" opacity=".75" transform="rotate(-12 1362 206)"/><path d="M1327 154.300L1364.200 139L1395.500 160L1354.700 177.600Z" fill="#f8f8f8" stroke="#c5c9ce" stroke-width=".8" stroke-dasharray="6 2.500"/><path d="M1327 154.300L1354.700 177.600L1355 215.500L1330 190Z" fill="#efefef" stroke="#c5c9ce" stroke-width=".8" stroke-dasharray="6 2.500"/><linearGradient id="gCubeF" x1="0" y1="0" x2="0" y2="1"><stop offset="0" stop-color="#f1f1f1"/><stop offset=".6" stop-color="#ebebeb"/><stop offset="1" stop-color="#dadada"/></linearGradient><path d="M1354.700 177.600L1395.500 160L1392.600 195.800L1355 215.500Z" fill="url(#gCubeF)" stroke="#c5c9ce" stroke-width=".8" stroke-dasharray="6 2.500"/><path d="M1349 173L1356 170.300L1362 174.500L1354.700 177.600Z" fill="#dcdcdc"/><text transform="translate(1351 163.500) rotate(-19) skewX(-30)" font-family="Liberation Sans,sans-serif" font-size="9.500" fill="#a1a5aa">TOP</text><text transform="translate(1361.500 199.500) rotate(-23) skewX(-4)" font-family="Liberation Sans,sans-serif" font-size="9.800" fill="#96a0ad" font-weight="bold" font-style="italic">FRONT</text><text transform="translate(1335 176) rotate(44) skewX(8)" font-family="Liberation Sans,sans-serif" font-size="6" fill="#a6abb2" font-weight="bold">LEFT</text><path d="M1325.500 146L1330 190" stroke="#6be65c" stroke-width="1.700"/><path d="M1330 190L1360 221" stroke="#6a7de8" stroke-width="1.700"/><text x="1320" y="143" font-family="Liberation Sans,sans-serif" font-size="11" fill="#7be86f">Y</text><text x="1358" y="231.500" font-family="Liberation Sans,sans-serif" font-size="12.500" fill="#7a8cf0">Z</text></svg>
<div class="abs" style="left:7px;top:145px;width:5px;height:611px;background:rgba(200,200,200,.8)"></div>
<div class="abs" style="left:7px;top:235px;width:5px;height:521px;background:rgba(150,150,150,.75);border-radius:2px"></div>
<div id="bhead" class="abs"></div>
<svg class="abs" style="left:6.5px;top:124px" width="11" height="9" viewBox="0 0 11 9"><path d="M5 0.500V8.500L0.500 4.500ZM10.500 0.500V8.500L6 4.500Z" fill="#333"/></svg>
<div class="t " style="left:27px;top:122.5px;font-size:11px;color:#3a3a3a">BROWSER</div>
<svg class="abs" style="left:280px;top:123.5px" width="10" height="10" viewBox="0 0 10 10"><circle cx="5" cy="5" r="4.500" fill="#2a2a2a"/><rect x="2.300" y="4.200" width="5.400" height="1.600" fill="#fff"/></svg>
<div class="abs" style="left:296px;top:122px;width:1px;height:13px;background:#555"></div><div class="abs" style="left:298px;top:124px;width:1px;height:9px;background:#aaa"></div>
<svg class="abs" style="left:36px;top:150px" width="13" height="12" viewBox="0 0 13 12"><path d="M11.500 1V11H1.500Z" fill="#8d9199" stroke="#333" stroke-width="1"/></svg>
<svg class="abs" style="left:60.5px;top:148.500px" width="12" height="15"><use href="#iBulbY"/></svg>
<svg class="abs" style="left:83px;top:149px" width="19" height="14" viewBox="0 0 19 14"><path d="M1 2.500H7L8.500 4.500H17.500V13H1Z" fill="#fbfcfe" stroke="#2c3a55" stroke-width="1.100"/><path d="M1 6.500H17.500" stroke="#6a7890" stroke-width=".7"/></svg>
<div class="lbl" style="left:114px;top:151px">Bodies</div>
<div class="row" style="top:170px;width:99px"></div>
<svg class="abs" style="left:78.2px;top:172.5px" width="12" height="15"><use href="#iBulbB"/></svg>
<svg class="abs" style="left:101px;top:171px" width="18" height="18"><use href="#iBody"/></svg>
<div class="lbl" style="top:175px">Body3</div>
<div class="row" style="top:194px;width:107px"></div>
<svg class="abs" style="left:78.2px;top:196.5px" width="12" height="15"><use href="#iBulbB"/></svg>
<svg class="abs" style="left:101px;top:195px" width="18" height="18"><use href="#iBody"/></svg>
<div class="lbl" style="top:199px">Body12</div>
<div class="row" style="top:218px;width:107px"></div>
<svg class="abs" style="left:78.2px;top:220.5px" width="12" height="15"><use href="#iBulbB"/></svg>
<svg class="abs" style="left:101px;top:219px" width="18" height="18"><use href="#iBody"/></svg>
<div class="lbl" style="top:223px">Body13</div>
<div class="row" style="top:242px;width:107px"></div>
<svg class="abs" style="left:78.2px;top:244.5px" width="12" height="15"><use href="#iBulbB"/></svg>
<svg class="abs" style="left:101px;top:243px" width="18" height="18"><use href="#iBody"/></svg>
<div class="lbl" style="top:247px">Body17</div>
<div class="row" style="top:266px;width:107px"></div>
<svg class="abs" style="left:78.2px;top:268.5px" width="12" height="15"><use href="#iBulbB"/></svg>
<svg class="abs" style="left:101px;top:267px" width="18" height="18"><use href="#iBody"/></svg>
<div class="lbl" style="top:271px">Body19</div>
<div class="row" style="top:290px;width:107px"></div>
<svg class="abs" style="left:78.2px;top:292.5px" width="12" height="15"><use href="#iBulbB"/></svg>
<svg class="abs" style="left:101px;top:291px" width="18" height="18"><use href="#iBody"/></svg>
<div class="lbl" style="top:295px">Body25</div>
<div class="row" style="top:314px;width:99px"></div>
<svg class="abs" style="left:78.2px;top:316.5px" width="12" height="15"><use href="#iBulbY"/></svg>
<svg class="abs" style="left:101px;top:315px" width="18" height="18"><use href="#iBody"/></svg>
<div class="lbl" style="top:319px">Body1</div>
<div class="row" style="top:338px;width:107px"></div>
<svg class="abs" style="left:78.2px;top:340.5px" width="12" height="15"><use href="#iBulbY"/></svg>
<svg class="abs" style="left:101px;top:339px" width="18" height="18"><use href="#iBody"/></svg>
<div class="lbl" style="top:343px">Body37</div>
<div class="row" style="top:362px;width:107px"></div>
<svg class="abs" style="left:78.2px;top:364.5px" width="12" height="15"><use href="#iBulbY"/></svg>
<svg class="abs" style="left:101px;top:363px" width="18" height="18"><use href="#iBody"/></svg>
<div class="lbl" style="top:367px">Body42</div>
<div class="row" style="top:386px;width:107px"></div>
<svg class="abs" style="left:78.2px;top:388.5px" width="12" height="15"><use href="#iBulbY"/></svg>
<svg class="abs" style="left:101px;top:387px" width="18" height="18"><use href="#iBody"/></svg>
<div class="lbl" style="top:391px">Body49</div>
<div class="row" style="top:410px;width:107px"></div>
<svg class="abs" style="left:78.2px;top:412.5px" width="12" height="15"><use href="#iBulbY"/></svg>
<svg class="abs" style="left:101px;top:411px" width="18" height="18"><use href="#iBody"/></svg>
<div class="lbl" style="top:415px">Body59</div>
<div class="row" style="top:434px;width:107px"></div>
<svg class="abs" style="left:78.2px;top:436.5px" width="12" height="15"><use href="#iBulbY"/></svg>
<svg class="abs" style="left:101px;top:435px" width="18" height="18"><use href="#iBody"/></svg>
<div class="lbl" style="top:439px">Body70</div>
<div class="row" style="top:458px;width:107px"></div>
<svg class="abs" style="left:78.2px;top:460.5px" width="12" height="15"><use href="#iBulbY"/></svg>
<svg class="abs" style="left:101px;top:459px" width="18" height="18"><use href="#iBody"/></svg>
<div class="lbl" style="top:463px">Body75</div>
<div class="row" style="top:482px;width:107px"></div>
<svg class="abs" style="left:78.2px;top:484.5px" width="12" height="15"><use href="#iBulbB"/></svg>
<svg class="abs" style="left:101px;top:483px" width="18" height="18"><use href="#iBody"/></svg>
<div class="lbl" style="top:487px">Body78</div>
<div class="row" style="top:506px;width:107px"></div>
<svg class="abs" style="left:78.2px;top:508.5px" width="12" height="15"><use href="#iBulbB"/></svg>
<svg class="abs" style="left:101px;top:507px" width="18" height="18"><use href="#iBody"/></svg>
<div class="lbl" style="top:511px">Body83</div>
<div class="row" style="top:530px;width:107px"></div>
<svg class="abs" style="left:78.2px;top:532.5px" width="12" height="15"><use href="#iBulbB"/></svg>
<svg class="abs" style="left:101px;top:531px" width="18" height="18"><use href="#iBody"/></svg>
<div class="lbl" style="top:535px">Body85</div>
<div class="row" style="top:554px;width:107px"></div>
<svg class="abs" style="left:78.2px;top:556.5px" width="12" height="15"><use href="#iBulbY"/></svg>
<svg class="abs" style="left:101px;top:555px" width="18" height="18"><use href="#iBody"/></svg>
<div class="lbl" style="top:559px">Body86</div>
<div class="row" style="top:578px;width:107px"></div>
<svg class="abs" style="left:78.2px;top:580.5px" width="12" height="15"><use href="#iBulbB"/></svg>
<svg class="abs" style="left:101px;top:579px" width="18" height="18"><use href="#iBody"/></svg>
<div class="lbl" style="top:583px">Body87</div>
<div class="row" style="top:602px;width:107px"></div>
<svg class="abs" style="left:78.2px;top:604.5px" width="12" height="15"><use href="#iBulbB"/></svg>
<svg class="abs" style="left:101px;top:603px" width="18" height="18"><use href="#iBody"/></svg>
<div class="lbl" style="top:607px">Body88</div>
<div class="row" style="top:626px;width:107px"></div>
<svg class="abs" style="left:78.2px;top:628.5px" width="12" height="15"><use href="#iBulbB"/></svg>
<svg class="abs" style="left:101px;top:627px" width="18" height="18"><use href="#iBody"/></svg>
<div class="lbl" style="top:631px">Body89</div>
<div class="row" style="top:650px;width:107px"></div>
<svg class="abs" style="left:78.2px;top:652.5px" width="12" height="15"><use href="#iBulbB"/></svg>
<svg class="abs" style="left:101px;top:651px" width="18" height="18"><use href="#iBody"/></svg>
<div class="lbl" style="top:655px">Body90</div>
<div class="row" style="top:674px;width:107px"></div>
<svg class="abs" style="left:78.2px;top:676.5px" width="12" height="15"><use href="#iBulbB"/></svg>
<svg class="abs" style="left:101px;top:675px" width="18" height="18"><use href="#iBody"/></svg>
<div class="lbl" style="top:679px">Body91</div>
<div class="row" style="top:698px;width:107px"></div>
<svg class="abs" style="left:78.2px;top:700.5px" width="12" height="15"><use href="#iBulbY"/></svg>
<svg class="abs" style="left:101px;top:699px" width="18" height="18"><use href="#iBody"/></svg>
<div class="lbl" style="top:703px">Body93</div>
<div class="row" style="top:722px;width:107px"></div>
<svg class="abs" style="left:78.2px;top:724.5px" width="12" height="15"><use href="#iBulbY"/></svg>
<svg class="abs" style="left:101px;top:723px" width="18" height="18"><use href="#iBody"/></svg>
<div class="lbl" style="top:727px">Body96</div>
<div class="row" style="top:746px;width:107px"></div>
<svg class="abs" style="left:78.2px;top:748.5px" width="12" height="15"><use href="#iBulbY"/></svg>
<svg class="abs" style="left:101px;top:747px" width="18" height="18"><use href="#iBody"/></svg>
<div class="lbl" style="top:751px">Body101</div>
<div id="chead" class="abs"></div>
<div class="t " style="left:27px;top:786.5px;font-size:11px;color:#3a3a3a;letter-spacing:.5px">COMMENTS</div>
<svg class="abs" style="left:280px;top:787.5px" width="10" height="10" viewBox="0 0 10 10"><circle cx="5" cy="5" r="4.500" fill="#2a2a2a"/><rect x="2.300" y="4.200" width="5.400" height="1.600" fill="#fff"/><rect x="4.200" y="2.300" width="1.600" height="5.400" fill="#fff"/></svg>
<div class="abs" style="left:296px;top:786px;width:1px;height:13px;background:#555"></div><div class="abs" style="left:298px;top:788px;width:1px;height:9px;background:#aaa"></div>
<svg class="abs" style="left:585px;top:783px" width="18" height="18" viewBox="0 0 18 18"><ellipse cx="9" cy="10" rx="7.500" ry="3" fill="none" stroke="#2f2f2f" stroke-width="1.300"/><path d="M9 17V3.500M6.500 6L9 2L11.500 6" fill="none" stroke="#2f2f2f" stroke-width="1.300"/><path d="M1 11L5.500 13L2.500 15.500Z" fill="#2f2f2f"/></svg>
<div class="tri" style="left:607px;top:791px;border-top-color:#2f2f2f;border-left-width:2.8px;border-right-width:2.8px;border-top-width:3.8px"></div>
<svg class="abs" style="left:619px;top:784px" width="18" height="17" viewBox="0 0 18 17"><rect x="1.500" y="6" width="15" height="10" fill="none" stroke="#2f2f2f" stroke-width="1.400"/><rect x="4.500" y="9.500" width="9" height="3" fill="none" stroke="#2f2f2f" stroke-width="1"/><path d="M3 6L6 1.500L12 3.500L15 6" fill="none" stroke="#2f2f2f" stroke-width="1.100"/></svg>
<svg class="abs" style="left:644px;top:783px" width="18" height="19" viewBox="0 0 18 19"><path d="M5 11V5Q5 3.800 6 3.800Q7 3.800 7 5V9V2.800Q7 1.500 8.200 1.500Q9.300 1.500 9.300 2.800V9V3.500Q9.300 2.300 10.400 2.300Q11.500 2.300 11.500 3.500V9.500V5.500Q11.500 4.500 12.500 4.500Q13.600 4.500 13.600 5.500V12Q13.600 17.500 9 17.500Q6 17.500 4.500 14.500L2 10.500Q1.500 9.300 2.500 9Q3.500 8.800 5 11Z" fill="#fdfdfd" stroke="#2f2f2f" stroke-width="1.100"/></svg>
<svg class="abs" style="left:671px;top:783px" width="18" height="18" viewBox="0 0 18 18"><circle cx="6.500" cy="8" r="4.800" fill="#eef2f8" stroke="#2f2f2f" stroke-width="1.400"/><path d="M10 11.500L15 16.500" stroke="#2f2f2f" stroke-width="2.400"/><path d="M12.500 3H16.500M14.500 1V5M12.500 7.500H16.500" stroke="#2f2f2f" stroke-width="1"/></svg>
<svg class="abs" style="left:697px;top:783px" width="19" height="18" viewBox="0 0 19 18"><circle cx="8" cy="7.500" r="6" fill="#eef2f8" stroke="#2f2f2f" stroke-width="1.500"/><rect x="5" y="5" width="6" height="5" fill="none" stroke="#2f2f2f" stroke-width="1"/><path d="M12.500 12L17.500 17" stroke="#2f2f2f" stroke-width="2.600"/></svg>
<div class="tri" style="left:719px;top:791px;border-top-color:#2f2f2f;border-left-width:2.8px;border-right-width:2.8px;border-top-width:3.8px"></div>
<svg class="abs" style="left:738px;top:785px" width="17" height="15" viewBox="0 0 17 15"><rect x="1" y="1" width="15" height="10" fill="#7f9fd0" stroke="#2f2f2f" stroke-width="1.300"/><rect x="3" y="3" width="11" height="6" fill="#b7cdea"/><path d="M6 14H11M8.500 11V14" stroke="#2f2f2f" stroke-width="1.500"/></svg>
<div class="tri" style="left:757px;top:791px;border-top-color:#2f2f2f;border-left-width:2.8px;border-right-width:2.8px;border-top-width:3.8px"></div>
<svg class="abs" style="left:771px;top:784px" width="16" height="16" viewBox="0 0 16 16"><rect x="1" y="1" width="14" height="14" fill="#c9c9c9"/><path d="M1 1V15M1 1H15M4.5 1V15M1 4.5H15M8 1V15M1 8H15M11.5 1V15M1 11.5H15M15 1V15M1 15H15" stroke="#3a3a3a" stroke-width=".9"/></svg>
<div class="tri" style="left:788px;top:791px;border-top-color:#2f2f2f;border-left-width:2.8px;border-right-width:2.8px;border-top-width:3.8px"></div>
<svg class="abs" style="left:801px;top:785px" width="16" height="15" viewBox="0 0 16 15"><rect x="1" y="1" width="6" height="5.500" fill="#9fb8e0" stroke="#2c3a55" stroke-width="1.200"/><rect x="9" y="1" width="6" height="5.500" fill="#9fb8e0" stroke="#2c3a55" stroke-width="1.200"/><rect x="1" y="8.500" width="6" height="5.500" fill="#9fb8e0" stroke="#2c3a55" stroke-width="1.200"/><rect x="9" y="8.500" width="6" height="5.500" fill="#9fb8e0" stroke="#2c3a55" stroke-width="1.200"/></svg>
<div class="tri" style="left:819px;top:791px;border-top-color:#2f2f2f;border-left-width:2.8px;border-right-width:2.8px;border-top-width:3.8px"></div>
<div id="topbar" class="abs"></div><div id="tab" class="abs"></div>
<svg class="abs" style="left:7px;top:8px" width="14" height="14" viewBox="0 0 14 14"><rect x="0" y="0" width="4" height="4" fill="#636260"/><rect x="5" y="0" width="4" height="4" fill="#636260"/><rect x="10" y="0" width="4" height="4" fill="#636260"/><rect x="0" y="5" width="4" height="4" fill="#636260"/><rect x="5" y="5" width="4" height="4" fill="#636260"/><rect x="10" y="5" width="4" height="4" fill="#636260"/><rect x="0" y="10" width="4" height="4" fill="#636260"/><rect x="5" y="10" width="4" height="4" fill="#636260"/><rect x="10" y="10" width="4" height="4" fill="#636260"/></svg>
<svg class="abs" style="left:40px;top:6px" width="14" height="16" viewBox="0 0 14 16"><path d="M0 0H8.500L13.500 5V15.500H0Z" fill="#636260"/><path d="M8.500 0V5H13.500" fill="#c9c9c9" stroke="#c9c9c9" stroke-width="1"/></svg>
<div class="tri" style="left:59px;top:11px;border-top-color:#636260;border-left-width:3.6px;border-right-width:3.6px;border-top-width:5.5px"></div>
<svg class="abs" style="left:85px;top:7px" width="14" height="14" viewBox="0 0 14 14"><path d="M0 0H11.500L14 2.500V14H0Z" fill="#636260"/><rect x="2.500" y="1.200" width="8" height="4.300" fill="#c9c9c9"/><rect x="7.500" y="1.800" width="2" height="3" fill="#636260"/><rect x="2.500" y="8" width="9" height="6" fill="#c9c9c9"/><rect x="4" y="9.500" width="6" height="4.500" fill="#636260"/></svg>
<svg class="abs" style="left:116px;top:7px" width="18" height="15" viewBox="0 0 18 15"><path d="M7 1L2 6L7 11" fill="none" stroke="#636260" stroke-width="2.200"/><path d="M2.500 6H10Q15 6 14.500 13" fill="none" stroke="#636260" stroke-width="2.200"/></svg>
<div class="tri" style="left:140px;top:11px;border-top-color:#636260;border-left-width:3.6px;border-right-width:3.6px;border-top-width:5.5px"></div>
<svg class="abs" style="left:157px;top:7px" width="18" height="15" viewBox="0 0 18 15"><path d="M11 1L16 6L11 11" fill="none" stroke="#636260" stroke-width="2.200"/><path d="M15.500 6H8Q3 6 3.500 13" fill="none" stroke="#636260" stroke-width="2.200"/></svg>
<div class="tri" style="left:181px;top:11px;border-top-color:#636260;border-left-width:3.6px;border-right-width:3.6px;border-top-width:5.5px"></div>
<svg class="abs" style="left:603px;top:8px" width="18" height="16" viewBox="0 0 18 16"><path d="M1 3.500L8 0.500L17 3L9.500 6.500Z" fill="#6b6966"/><path d="M1 3.500L9.500 6.500V15.500L1 11.500Z" fill="#b4b4b2"/><path d="M9.500 6.500L17 3V11.500L9.500 15.500Z" fill="#6b6966"/><path d="M1 3.500L9.500 6.500V15.500L1 11.500Z" fill="none" stroke="#6b6966" stroke-width=".8"/></svg>
<div class="t " style="left:623px;top:10px;font-size:13px;color:#222">Makita Angle Grinder v1*</div>
<svg class="abs" style="left:1175.5px;top:11px" width="11" height="11" viewBox="0 0 11 11"><path d="M1.500 1.500L9.200 9.200M9.200 1.500L1.500 9.200" stroke="#555" stroke-width="1.200"/></svg>
<div class="abs" style="left:1196px;top:2px;width:28px;height:27.500px;background:#b4b4b4;border-radius:3px 3px 0 0"></div>
<svg class="abs" style="left:1203.5px;top:8.2px" width="14" height="14" viewBox="0 0 14 14"><path d="M7 0.500V13.500M0.500 7H13.500" stroke="#686868" stroke-width="2.300"/></svg>
<svg class="abs" style="left:1235.5px;top:6px" width="17" height="17" viewBox="0 0 17 17"><circle cx="8.500" cy="8.500" r="8" fill="#5a5a5a"/><path d="M3.800 13.600L8.200 9.200A3.300 3.300 0 0 1 12.600 5L10.500 7.100L11.300 8.200L12.500 8.600L14.300 6.800A3.300 3.300 0 0 1 9.800 10.800L5.600 15Z" fill="#c9c9c9"/></svg>
<svg class="abs" style="left:1268.5px;top:5.6px" width="17" height="17" viewBox="0 0 17 17"><circle cx="8.500" cy="8.500" r="7.800" fill="#c9c9c9" stroke="#5a5a5a" stroke-width="1"/><circle cx="8.500" cy="8.500" r="6" fill="#5a5a5a"/><path d="M8.500 4.800V9H11.800" stroke="#c9c9c9" stroke-width="1.300" fill="none"/></svg>
<div class="t " style="left:1309.5px;top:9px;font-size:12px;color:#2a2a2a">Keqing Song</div>
<svg class="abs" style="left:1398.5px;top:6px" width="17" height="17" viewBox="0 0 17 17"><circle cx="8.500" cy="8.500" r="8" fill="#5a5a5a"/><text x="8.500" y="13" text-anchor="middle" font-family="Liberation Sans,sans-serif" font-weight="bold" font-size="12.500" fill="#c9c9c9">?</text></svg>
<div id="toolbar" class="abs"></div><div id="tbline" class="abs"></div>
<div id="design" class="abs"></div>
<div class="t " style="left:37.5px;top:66.5px;font-size:10.8px;font-weight:bold;color:#2b2f38;letter-spacing:.1px">DESIGN</div>
<div class="tri" style="left:83px;top:69.5px;border-top-color:#333;border-left-width:3.1px;border-right-width:3.1px;border-top-width:4.2px"></div>
<div class="t tabl" style="left:144.5px;top:36.2px;color:#0696d7;font-size:12.2px;top:36.2px">SOLID</div>
<div class="abs" style="left:132px;top:48px;width:59px;height:3px;background:#0696d7"></div>
<div class="t tabl" style="left:222.5px;top:35.5px;">SURFACE</div>
<div class="t tabl" style="left:315px;top:35.5px;">SHEET METAL</div>
<div class="t tabl" style="left:434px;top:35.5px;">TOOLS</div>
<div class="sep" style="left:388px"></div>
<div class="sep" style="left:656px"></div>
<div class="sep" style="left:754px"></div>
<div class="sep" style="left:858px"></div>
<div class="sep" style="left:937px"></div>
<div class="sep" style="left:1011px"></div>
<div class="t grp" style="left:227px;top:97px;">CREATE<svg class="dd" width="6" height="4.2" viewBox="0 0 6 4.2"><path d="M0 0H6L3 4.200Z" fill="#2e2e2e"/></svg></div>
<div class="t grp" style="left:495.5px;top:97px;">MODIFY<svg class="dd" width="6" height="4.2" viewBox="0 0 6 4.2"><path d="M0 0H6L3 4.200Z" fill="#2e2e2e"/></svg></div>
<div class="t grp" style="left:674px;top:97px;">ASSEMBLE<svg class="dd" width="6" height="4.2" viewBox="0 0 6 4.2"><path d="M0 0H6L3 4.200Z" fill="#2e2e2e"/></svg></div>
<div class="t grp" style="left:769px;top:97px;">CONSTRUCT<svg class="dd" width="6" height="4.2" viewBox="0 0 6 4.2"><path d="M0 0H6L3 4.200Z" fill="#2e2e2e"/></svg></div>
<div class="t grp" style="left:873px;top:97px;">INSPECT<svg class="dd" width="6" height="4.2" viewBox="0 0 6 4.2"><path d="M0 0H6L3 4.200Z" fill="#2e2e2e"/></svg></div>
<div class="t grp" style="left:952px;top:97px;">INSERT<svg class="dd" width="6" height="4.2" viewBox="0 0 6 4.2"><path d="M0 0H6L3 4.200Z" fill="#2e2e2e"/></svg></div>
<div class="t grp" style="left:1026px;top:97px;">SELECT<svg class="dd" width="6" height="4.2" viewBox="0 0 6 4.2"><path d="M0 0H6L3 4.200Z" fill="#2e2e2e"/></svg></div>
<svg class="abs" style="left:132px;top:57px" width="32" height="30" viewBox="0 0 32 30"><rect x="1.500" y="3" width="25" height="25" fill="#fbfbfc" stroke="#2a2a2a" stroke-width="1.400"/><rect x="3" y="4.500" width="22" height="22" fill="url(#gyt)" opacity=".7"/><path d="M5 6V24.500H21" stroke="#555" stroke-width=".9" fill="none"/><rect x="3.500" y="22" width="3.500" height="3.500" fill="#2f9ad6"/><path d="M12 12L23.500 1L28 4.500L16.500 16Z" fill="#f6bd23" stroke="#8a6510" stroke-width=".7"/><path d="M12 12L11 17L16.500 16Z" fill="#f3e3c0" stroke="#8a6510" stroke-width=".5"/><path d="M18 24.500H30M24 18.500V30.500" stroke="#222" stroke-width="4.200"/><path d="M19 24.500H29M24 19.500V29.500" stroke="#fff" stroke-width="2.200"/></svg>
<svg class="abs" style="left:174px;top:56px" width="34" height="32" viewBox="0 0 34 32"><path d="M2 6L7 1H24L19.500 6Z" fill="url(#blt)" stroke="#4a5a78" stroke-width=".7"/><path d="M19.500 6L24 1V26L19.500 30.500Z" fill="#5f86c2" stroke="#4a5a78" stroke-width=".7"/><rect x="2" y="6" width="17.500" height="24.500" fill="url(#bl)" stroke="#4a5a78" stroke-width=".7"/><path d="M2 26h17.500v4.500H2z" fill="#e1e5ec" stroke="#4a5a78" stroke-width=".5"/><path d="M29.500 29V5M26.500 9.500L29.500 4L32.500 9.500" stroke="#222" stroke-width="1.200" fill="none"/></svg>
<svg class="abs" style="left:216px;top:57px" width="34" height="30" viewBox="0 0 34 30"><path d="M30.800 5.800Q17 -1.500 4.500 4.800" fill="none" stroke="#333" stroke-width="1.100"/><path d="M1.800 6.800L7.800 2.600L8.300 7.800Z" fill="#333"/><path d="M2 13.600Q16.400 3.500 32 13L24.800 18.400Q16.400 14.600 9.200 18.400Z" fill="url(#blt)" stroke="#2c3a55" stroke-width=".8"/><path d="M2 13.600L9.200 18.400V28L2 23.200Z" fill="#7fa3d8" stroke="#2c3a55" stroke-width=".8"/><path d="M9.200 18.400Q16.400 14.600 24.800 18.400V28Q16.400 24.200 9.200 28Z" fill="url(#bl)" stroke="#2c3a55" stroke-width=".8"/><path d="M24.800 18.400L32 13V23.200L24.800 28Z" fill="#fbfcfe" stroke="#1c2435" stroke-width="1"/></svg>
<svg class="abs" style="left:260px;top:58px" width="32" height="30" viewBox="0 0 32 30"><path d="M2 7.5L8 1.5H30L24 7.5Z" fill="url(#gyt)" stroke="#555" stroke-width=".7"/><path d="M24 7.5L30 1.5V22.5L24 28.5Z" fill="#aab0bb" stroke="#555" stroke-width=".7"/><rect x="2" y="7.5" width="22" height="21" fill="url(#gy)" stroke="#555" stroke-width=".7"/><ellipse cx="13" cy="18" rx="7" ry="7.500" fill="#88a9da" stroke="#3a4a68" stroke-width=".8"/><ellipse cx="15" cy="17" rx="4.500" ry="5" fill="#dfe9f7"/></svg>
<svg class="abs" style="left:302px;top:57px" width="33" height="32" viewBox="0 0 33 32"><path d="M6 6V26M6 6H26M6 26H26" stroke="#333" stroke-width="1.100" fill="none"/><rect x="1" y="1" width="9.500" height="9.500" rx="1.500" fill="url(#gy)" stroke="#444" stroke-width=".8"/><rect x="21.500" y="1" width="9.500" height="9.500" rx="1.500" fill="url(#bl)" stroke="#4a5a78" stroke-width=".8"/><rect x="1" y="21.500" width="9.500" height="9.500" rx="1.500" fill="url(#bl)" stroke="#4a5a78" stroke-width=".8"/><rect x="21.500" y="21.500" width="9.500" height="9.500" rx="1.500" fill="url(#bl)" stroke="#4a5a78" stroke-width=".8"/></svg>
<svg class="abs" style="left:346px;top:57px" width="33" height="32" viewBox="0 0 33 32"><path d="M2 9Q2 1 14 1Q26 1 26 9V20Q26 26 14 26Q2 26 2 20Z" fill="url(#pur)" stroke="#7b3fa8" stroke-width=".8"/><path d="M2 10H26M2 15.500H26M2 21H26M8 2V25.500M14 1V26M20 2V25.500" stroke="#ecd9f8" stroke-width=".9" fill="none"/><path d="M2 9Q2 1 14 1Q26 1 26 9V20Q26 26 14 26Q2 26 2 20Z" fill="none" stroke="#7b3fa8" stroke-width="1"/><rect x="21.500" y="18.500" width="10" height="10" fill="#f4f4f4" stroke="#333" stroke-width="1"/><path d="M23.500 23.500H29M26.500 21L29.500 23.500L26.500 26" stroke="#222" stroke-width="1.200" fill="none"/></svg>
<svg class="abs" style="left:399px;top:56px" width="35" height="32" viewBox="0 0 35 32"><path d="M2 6L7 1H28L23 6Z" fill="url(#gyt)" stroke="#444" stroke-width=".7"/><path d="M23 6L28 1V26L23 31Z" fill="#5f86c2" stroke="#4a5a78" stroke-width=".7"/><rect x="2" y="6" width="6" height="25" fill="url(#gy)" stroke="#444" stroke-width=".7"/><rect x="8" y="6" width="15" height="25" fill="url(#bl)" stroke="#4a5a78" stroke-width=".7"/><path d="M23 13.300H27.300V11L32 15L27.300 19V16.700H23Z" fill="#222"/></svg>
<svg class="abs" style="left:442px;top:57px" width="32" height="31" viewBox="0 0 32 31"><path d="M2 11L10 2H16Q12 10 16 14L13 15Z" fill="url(#gyt)" stroke="#444" stroke-width=".7"/><path d="M16 2Q28 3 29 14V24L23 30V19Q22 12 13 11Q12 6 16 2Z" fill="url(#blt)" stroke="#4a5a78" stroke-width=".7"/><path d="M2 11H13Q22 12 23 19V30H2Z" fill="url(#gy)" stroke="#444" stroke-width=".7"/></svg>
<svg class="abs" style="left:487px;top:58px" width="31" height="30" viewBox="0 0 31 30"><path d="M1.5 7L7.5 1H29.5L23.5 7Z" fill="url(#gyt)" stroke="#555" stroke-width=".7"/><path d="M23.5 7L29.5 1V23L23.5 29Z" fill="#aab0bb" stroke="#555" stroke-width=".7"/><rect x="1.5" y="7" width="22" height="22" fill="url(#gy)" stroke="#555" stroke-width=".7"/><rect x="6" y="11.500" width="13" height="13" fill="url(#bl)" stroke="#3a4a68" stroke-width=".8"/><rect x="10" y="11.500" width="9" height="9" fill="#f7f9fc" stroke="#3a4a68" stroke-width=".7"/></svg>
<svg class="abs" style="left:529px;top:57px" width="32" height="31" viewBox="0 0 32 31"><path d="M12 6L17 1H31L26 6Z" fill="url(#blt)" stroke="#4a5a78" stroke-width=".7"/><path d="M26 6L31 1V14L26 19Z" fill="#5f86c2" stroke="#4a5a78" stroke-width=".7"/><rect x="12" y="6" width="14" height="13" fill="url(#bl)" stroke="#4a5a78" stroke-width=".7"/><path d="M1 16L6 11H20L15 16Z" fill="url(#blt)" stroke="#4a5a78" stroke-width=".7"/><path d="M15 16L20 11V25L15 30Z" fill="#5f86c2" stroke="#4a5a78" stroke-width=".7"/><rect x="1" y="16" width="14" height="14" fill="url(#bl)" stroke="#4a5a78" stroke-width=".7"/></svg>
<svg class="abs" style="left:572px;top:58px" width="31" height="30" viewBox="0 0 31 30"><path d="M1 8L8 1H30L23 8Z" fill="url(#blt)" stroke="#4a5a78" stroke-width=".7"/><path d="M23 8L30 1V22L23 29Z" fill="#7d9fd4" stroke="#4a5a78" stroke-width=".7"/><rect x="1" y="8" width="22" height="21" fill="url(#gy)" stroke="#4a5a78" stroke-width=".7"/><path d="M1 8H23V16Q17 20 12 16Q6 12 1 18Z" fill="url(#bl)"/><path d="M23 8L30 1V9L23 16Z" fill="#5f86c2"/><path d="M1 18Q6 12 12 16Q17 20 23 16L30 9" fill="none" stroke="#d8341c" stroke-width="1.300"/></svg>
<svg class="abs" style="left:616px;top:58px" width="30" height="30" viewBox="0 0 30 30"><path d="M15 1L20.500 8H17V11.800H13V8H9.500Z" fill="#3a3a3a" transform="rotate(0 15 15)"/><path d="M15 1L20.500 8H17V11.800H13V8H9.500Z" fill="#3a3a3a" transform="rotate(90 15 15)"/><path d="M15 1L20.500 8H17V11.800H13V8H9.500Z" fill="#3a3a3a" transform="rotate(180 15 15)"/><path d="M15 1L20.500 8H17V11.800H13V8H9.500Z" fill="#3a3a3a" transform="rotate(270 15 15)"/><rect x="12.700" y="12.700" width="4.600" height="4.600" fill="#ececec" stroke="#4a4a4a" stroke-width="1"/></svg>
<svg class="abs" style="left:668px;top:56px" width="33" height="32" viewBox="0 0 33 32"><path d="M3 7L6 4H20L17 7Z" fill="url(#blt)" stroke="#4a5a78" stroke-width=".7"/><path d="M17 7L20 4V15L17 18Z" fill="#5f86c2" stroke="#4a5a78" stroke-width=".7"/><rect x="3" y="7" width="14" height="11" fill="url(#bl)" stroke="#4a5a78" stroke-width=".7"/><path d="M3 19L6 16H17L14 19Z" fill="url(#gyt)" stroke="#555" stroke-width=".7"/><path d="M14 19L17 16V29L14 32Z" fill="#aab0bb" stroke="#555" stroke-width=".7"/><rect x="3" y="19" width="11" height="13" fill="url(#gy)" stroke="#555" stroke-width=".7"/><path d="M15 19L18 16H31L28 19Z" fill="url(#gyt)" stroke="#555" stroke-width=".7"/><path d="M28 19L31 16V29L28 32Z" fill="#aab0bb" stroke="#555" stroke-width=".7"/><rect x="15" y="19" width="13" height="13" fill="url(#gy)" stroke="#555" stroke-width=".7"/><path d="M2 7.500H14M8 1.500V13.500" stroke="#222" stroke-width="4.400"/><path d="M3 7.500H13M8 2.500V12.500" stroke="#fff" stroke-width="2.300"/></svg>
<svg class="abs" style="left:712px;top:57px" width="32" height="31" viewBox="0 0 32 31"><path d="M1 12L7 6V26L1 31Z" fill="url(#gy)" stroke="#444" stroke-width=".7"/><path d="M31 12L25 6V24L31 30Z" fill="url(#gy)" stroke="#444" stroke-width=".7"/><rect x="6" y="3" width="6.500" height="23" rx="3" fill="url(#cyl)" stroke="#444" stroke-width=".8"/><rect x="19" y="9" width="6.500" height="19" rx="3" fill="url(#cyl)" stroke="#444" stroke-width=".8"/><circle cx="9.200" cy="3.500" r="1.300" fill="#333"/><path d="M16 8V22M13 15H19" stroke="#e8621c" stroke-width="1.200"/></svg>
<svg class="abs" style="left:790px;top:57px" width="34" height="32" viewBox="0 0 34 32"><path d="M2 10L9 2V22L2 30Z" fill="url(#gy)" stroke="#555" stroke-width=".7"/><path d="M9 2L16 1V23L9 22Z" fill="#c9cdd5" stroke="#555" stroke-width=".6"/><path d="M9 9L16 2V24L9 31Z" fill="#5e9a4c" stroke="#2d5a22" stroke-width=".8"/><path d="M22 10L31 1V21L22 30Z" fill="#e89a62" stroke="#a85a22" stroke-width=".8"/></svg>
<svg class="abs" style="left:881px;top:62px" width="33" height="22" viewBox="0 0 33 22"><path d="M1.500 1V8M31.500 1V8M1.500 4.500H31.500" stroke="#333" stroke-width="1" fill="none"/><rect x="1.500" y="11.500" width="30" height="7.500" fill="#f2b820" stroke="#8a6510" stroke-width=".8"/><path d="M5 11.500V15M8 11.500V14M11 11.500V15M14 11.500V14M17 11.500V15M20 11.500V14M23 11.500V15M26 11.500V14M29 11.500V15" stroke="#8a6510" stroke-width=".6"/></svg>
<svg class="abs" style="left:959px;top:57px" width="32" height="32" viewBox="0 0 32 32"><rect x="1" y="1" width="30" height="30" fill="#c6d4ea" stroke="#444" stroke-width="1.200"/><rect x="2" y="2" width="28" height="14" fill="#b5c8e6"/><circle cx="22" cy="9" r="3.500" fill="#f7f3d0"/><path d="M2 30L2 22L11 13L20 24L24 20L30 26V30Z" fill="#70757c"/><path d="M11 13L20 24L16 30H2V22Z" fill="#5d6269"/><path d="M20 24L24 20L30 26V30H16Z" fill="#8a9098"/></svg>
<div class="abs" style="left:1030px;top:54px;width:38px;height:38px;background:#0c8ce0"></div>
<svg class="abs" style="left:1030px;top:54px" width="38" height="38" viewBox="0 0 38 38"><rect x="4.500" y="4.500" width="20" height="14" fill="none" stroke="#2e9e3a" stroke-width="1.400"/><path d="M24 17V32L27.500 28.500L30 34L32.500 33L30 27.500H35Z" fill="#111" stroke="#fff" stroke-width="1.100"/></svg>
<div id="tline" class="abs"></div><div id="timeline" class="abs"></div>
<svg class="abs" style="left:8px;top:829.5px" width="14" height="16" viewBox="0 0 14 16"><rect x="0.500" y="1.500" width="2" height="13" fill="#2f2f2f"/><path d="M13 1.500V14.500L3 8Z" fill="#2f2f2f"/></svg>
<svg class="abs" style="left:33px;top:831.5px" width="14" height="12" viewBox="0 0 14 12"><path d="M9 0.500V11.500L1 6Z" fill="#2f2f2f"/><rect x="10.500" y="3" width="2" height="6" fill="#2f2f2f"/></svg>
<svg class="abs" style="left:58px;top:829.5px" width="13" height="16" viewBox="0 0 13 16"><path d="M1 1V15L12 8Z" fill="#2f2f2f"/></svg>
<svg class="abs" style="left:82px;top:831.5px" width="14" height="12" viewBox="0 0 14 12"><path d="M5 0.500V11.500L13 6Z" fill="#2f2f2f"/><rect x="1.500" y="3" width="2" height="6" fill="#2f2f2f"/></svg>
<svg class="abs" style="left:107.5px;top:829.5px" width="14" height="16" viewBox="0 0 14 16"><rect x="11.500" y="1.500" width="2" height="13" fill="#2f2f2f"/><path d="M1 1.500V14.500L11 8Z" fill="#2f2f2f"/></svg>
<svg class="abs" style="left:141px;top:824px" width="20" height="20" viewBox="0 0 20 20"><path d="M3.500 5.500L6 2.500H13L10.800 5.500Z" fill="url(#blt)" stroke="#4a5a78" stroke-width=".6"/><path d="M10.800 5.500L13 2.500V15L10.800 18Z" fill="#5f86c2" stroke="#4a5a78" stroke-width=".6"/><rect x="3.500" y="5.500" width="7.300" height="12.500" fill="url(#bl)" stroke="#4a5a78" stroke-width=".6"/><path d="M3.500 15.500h7.300V18H3.500z" fill="#e1e5ec" stroke="#4a5a78" stroke-width=".4"/><path d="M16.800 17V4M15 7.500L16.800 3.500L18.600 7.500" stroke="#333" stroke-width="1" fill="none"/></svg>
<svg class="abs" style="left:165px;top:824px" width="20" height="20" viewBox="0 0 20 20"><g transform="translate(1 1.500) scale(.6)"><path d="M15 1L20.500 8H17V11.800H13V8H9.500Z" fill="#444" transform="rotate(0 15 15)"/><path d="M15 1L20.500 8H17V11.800H13V8H9.500Z" fill="#444" transform="rotate(90 15 15)"/><path d="M15 1L20.500 8H17V11.800H13V8H9.500Z" fill="#444" transform="rotate(180 15 15)"/><path d="M15 1L20.500 8H17V11.800H13V8H9.500Z" fill="#444" transform="rotate(270 15 15)"/><rect x="12.700" y="12.700" width="4.600" height="4.600" fill="#ececec" stroke="#4a4a4a" stroke-width="1.300"/></g></svg>
<svg class="abs" style="left:189px;top:824px" width="20" height="20" viewBox="0 0 20 20"><rect x="2.300" y="2.300" width="15.500" height="15.500" fill="url(#skf)" stroke="#111" stroke-width="1.200"/><path d="M5.600 4.500V15H15.500" stroke="#111" stroke-width="1.300" fill="none"/><path d="M6 14.600L10.500 10" stroke="#6a5a48" stroke-width="1.200"/><path d="M10 8.800L16 2.300L18.300 4.300L12 11Z" fill="#f7c21f" stroke="#b8860b" stroke-width=".4"/><path d="M10 8.800L9 11.800L12 11Z" fill="#e9d6b0"/></svg>
<svg class="abs" style="left:213px;top:824px" width="20" height="20" viewBox="0 0 20 20"><path d="M3.500 5.500L6 2.500H13L10.800 5.500Z" fill="url(#blt)" stroke="#4a5a78" stroke-width=".6"/><path d="M10.800 5.500L13 2.500V15L10.800 18Z" fill="#5f86c2" stroke="#4a5a78" stroke-width=".6"/><rect x="3.500" y="5.500" width="7.300" height="12.500" fill="url(#bl)" stroke="#4a5a78" stroke-width=".6"/><path d="M3.500 15.500h7.300V18H3.500z" fill="#e1e5ec" stroke="#4a5a78" stroke-width=".4"/><path d="M16.800 17V4M15 7.500L16.800 3.500L18.600 7.500" stroke="#333" stroke-width="1" fill="none"/></svg>
<svg class="abs" style="left:237px;top:824px" width="20" height="20" viewBox="0 0 20 20"><rect x="2.300" y="2.300" width="15.500" height="15.500" fill="url(#skf)" stroke="#111" stroke-width="1.200"/><path d="M5.600 4.500V15H15.500" stroke="#111" stroke-width="1.300" fill="none"/><path d="M6 14.600L10.500 10" stroke="#6a5a48" stroke-width="1.200"/><path d="M10 8.800L16 2.300L18.300 4.300L12 11Z" fill="#f7c21f" stroke="#b8860b" stroke-width=".4"/><path d="M10 8.800L9 11.800L12 11Z" fill="#e9d6b0"/></svg>
<svg class="abs" style="left:261px;top:824px" width="20" height="20" viewBox="0 0 20 20"><path d="M3.500 5.500L6 2.500H13L10.800 5.500Z" fill="url(#blt)" stroke="#4a5a78" stroke-width=".6"/><path d="M10.800 5.500L13 2.500V15L10.800 18Z" fill="#5f86c2" stroke="#4a5a78" stroke-width=".6"/><rect x="3.500" y="5.500" width="7.300" height="12.500" fill="url(#bl)" stroke="#4a5a78" stroke-width=".6"/><path d="M3.500 15.500h7.300V18H3.500z" fill="#e1e5ec" stroke="#4a5a78" stroke-width=".4"/><path d="M16.800 17V4M15 7.500L16.800 3.500L18.600 7.500" stroke="#333" stroke-width="1" fill="none"/></svg>
<svg class="abs" style="left:285px;top:824px" width="20" height="20" viewBox="0 0 20 20"><rect x="2.300" y="2.300" width="15.500" height="15.500" fill="url(#skf)" stroke="#111" stroke-width="1.200"/><path d="M5.600 4.500V15H15.500" stroke="#111" stroke-width="1.300" fill="none"/><path d="M6 14.600L10.500 10" stroke="#6a5a48" stroke-width="1.200"/><path d="M10 8.800L16 2.300L18.300 4.300L12 11Z" fill="#f7c21f" stroke="#b8860b" stroke-width=".4"/><path d="M10 8.800L9 11.800L12 11Z" fill="#e9d6b0"/></svg>
<svg class="abs" style="left:309px;top:824px" width="20" height="20" viewBox="0 0 20 20"><path d="M3.500 5.500L6 2.500H13L10.800 5.500Z" fill="url(#blt)" stroke="#4a5a78" stroke-width=".6"/><path d="M10.800 5.500L13 2.500V15L10.800 18Z" fill="#5f86c2" stroke="#4a5a78" stroke-width=".6"/><rect x="3.500" y="5.500" width="7.300" height="12.500" fill="url(#bl)" stroke="#4a5a78" stroke-width=".6"/><path d="M3.500 15.500h7.300V18H3.500z" fill="#e1e5ec" stroke="#4a5a78" stroke-width=".4"/><path d="M16.800 17V4M15 7.500L16.800 3.500L18.600 7.500" stroke="#333" stroke-width="1" fill="none"/></svg>
<svg class="abs" style="left:333px;top:824px" width="20" height="20" viewBox="0 0 20 20"><rect x="2.300" y="2.300" width="15.500" height="15.500" fill="url(#skf)" stroke="#111" stroke-width="1.200"/><path d="M5.600 4.500V15H15.500" stroke="#111" stroke-width="1.300" fill="none"/><path d="M6 14.600L10.500 10" stroke="#6a5a48" stroke-width="1.200"/><path d="M10 8.800L16 2.300L18.300 4.300L12 11Z" fill="#f7c21f" stroke="#b8860b" stroke-width=".4"/><path d="M10 8.800L9 11.800L12 11Z" fill="#e9d6b0"/></svg>
<svg class="abs" style="left:357px;top:824px" width="20" height="20" viewBox="0 0 20 20"><path d="M3.500 5.500L6 2.500H13L10.800 5.500Z" fill="url(#blt)" stroke="#4a5a78" stroke-width=".6"/><path d="M10.800 5.500L13 2.500V15L10.800 18Z" fill="#5f86c2" stroke="#4a5a78" stroke-width=".6"/><rect x="3.500" y="5.500" width="7.300" height="12.500" fill="url(#bl)" stroke="#4a5a78" stroke-width=".6"/><path d="M3.500 15.500h7.300V18H3.500z" fill="#e1e5ec" stroke="#4a5a78" stroke-width=".4"/><path d="M16.800 17V4M15 7.500L16.800 3.500L18.600 7.500" stroke="#333" stroke-width="1" fill="none"/></svg>
<svg class="abs" style="left:381px;top:824px" width="20" height="20" viewBox="0 0 20 20"><rect x="2.300" y="2.300" width="15.500" height="15.500" fill="url(#skf)" stroke="#111" stroke-width="1.200"/><path d="M5.600 4.500V15H15.500" stroke="#111" stroke-width="1.300" fill="none"/><path d="M6 14.600L10.500 10" stroke="#6a5a48" stroke-width="1.200"/><path d="M10 8.800L16 2.300L18.300 4.300L12 11Z" fill="#f7c21f" stroke="#b8860b" stroke-width=".4"/><path d="M10 8.800L9 11.800L12 11Z" fill="#e9d6b0"/></svg>
<svg class="abs" style="left:405px;top:824px" width="20" height="20" viewBox="0 0 20 20"><path d="M3.500 5.500L6 2.500H13L10.800 5.500Z" fill="url(#blt)" stroke="#4a5a78" stroke-width=".6"/><path d="M10.800 5.500L13 2.500V15L10.800 18Z" fill="#5f86c2" stroke="#4a5a78" stroke-width=".6"/><rect x="3.500" y="5.500" width="7.300" height="12.500" fill="url(#bl)" stroke="#4a5a78" stroke-width=".6"/><path d="M3.500 15.500h7.300V18H3.500z" fill="#e1e5ec" stroke="#4a5a78" stroke-width=".4"/><path d="M16.800 17V4M15 7.500L16.800 3.500L18.600 7.500" stroke="#333" stroke-width="1" fill="none"/></svg>
<svg class="abs" style="left:429px;top:824px" width="20" height="20" viewBox="0 0 20 20"><rect x="2.300" y="2.300" width="15.500" height="15.500" fill="url(#skf)" stroke="#111" stroke-width="1.200"/><path d="M5.600 4.500V15H15.500" stroke="#111" stroke-width="1.300" fill="none"/><path d="M6 14.600L10.500 10" stroke="#6a5a48" stroke-width="1.200"/><path d="M10 8.800L16 2.300L18.300 4.300L12 11Z" fill="#f7c21f" stroke="#b8860b" stroke-width=".4"/><path d="M10 8.800L9 11.800L12 11Z" fill="#e9d6b0"/></svg>
<svg class="abs" style="left:453px;top:824px" width="20" height="20" viewBox="0 0 20 20"><path d="M3.500 5.500L6 2.500H13L10.800 5.500Z" fill="url(#blt)" stroke="#4a5a78" stroke-width=".6"/><path d="M10.800 5.500L13 2.500V15L10.800 18Z" fill="#5f86c2" stroke="#4a5a78" stroke-width=".6"/><rect x="3.500" y="5.500" width="7.300" height="12.500" fill="url(#bl)" stroke="#4a5a78" stroke-width=".6"/><path d="M3.500 15.500h7.300V18H3.500z" fill="#e1e5ec" stroke="#4a5a78" stroke-width=".4"/><path d="M16.800 17V4M15 7.500L16.800 3.500L18.600 7.500" stroke="#333" stroke-width="1" fill="none"/></svg>
<svg class="abs" style="left:477px;top:824px" width="20" height="20" viewBox="0 0 20 20"><path d="M2 7L6 3H9.500Q7.500 7 9.500 9.500Z" fill="url(#gyt)" stroke="#444" stroke-width=".6"/><path d="M9.500 3Q17 3.500 18 10V15L15 18V12Q14 8 8 7.500Q7.500 5 9.500 3Z" fill="url(#bl)" stroke="#4a5a78" stroke-width=".6"/><path d="M2 7H8Q14 8 15 12V18H2Z" fill="url(#gy)" stroke="#444" stroke-width=".6"/></svg>
<svg class="abs" style="left:501px;top:824px" width="20" height="20" viewBox="0 0 20 20"><path d="M2 7L6 3H9.500Q7.500 7 9.500 9.500Z" fill="url(#gyt)" stroke="#444" stroke-width=".6"/><path d="M9.500 3Q17 3.500 18 10V15L15 18V12Q14 8 8 7.500Q7.500 5 9.500 3Z" fill="url(#bl)" stroke="#4a5a78" stroke-width=".6"/><path d="M2 7H8Q14 8 15 12V18H2Z" fill="url(#gy)" stroke="#444" stroke-width=".6"/></svg>
<svg class="abs" style="left:525px;top:824px" width="20" height="20" viewBox="0 0 20 20"><path d="M2 7L6 3H9.500Q7.500 7 9.500 9.500Z" fill="url(#gyt)" stroke="#444" stroke-width=".6"/><path d="M9.500 3Q17 3.500 18 10V15L15 18V12Q14 8 8 7.500Q7.500 5 9.500 3Z" fill="url(#bl)" stroke="#4a5a78" stroke-width=".6"/><path d="M2 7H8Q14 8 15 12V18H2Z" fill="url(#gy)" stroke="#444" stroke-width=".6"/></svg>
<svg class="abs" style="left:549px;top:824px" width="20" height="20" viewBox="0 0 20 20"><path d="M2 7L6 3H9.500Q7.500 7 9.500 9.500Z" fill="url(#gyt)" stroke="#444" stroke-width=".6"/><path d="M9.500 3Q17 3.500 18 10V15L15 18V12Q14 8 8 7.500Q7.500 5 9.500 3Z" fill="url(#bl)" stroke="#4a5a78" stroke-width=".6"/><path d="M2 7H8Q14 8 15 12V18H2Z" fill="url(#gy)" stroke="#444" stroke-width=".6"/></svg>
<svg class="abs" style="left:573px;top:824px" width="20" height="20" viewBox="0 0 20 20"><rect x="2.300" y="2.300" width="15.500" height="15.500" fill="url(#skf)" stroke="#111" stroke-width="1.200"/><path d="M5.600 4.500V15H15.500" stroke="#111" stroke-width="1.300" fill="none"/><path d="M6 14.600L10.500 10" stroke="#6a5a48" stroke-width="1.200"/><path d="M10 8.800L16 2.300L18.300 4.300L12 11Z" fill="#f7c21f" stroke="#b8860b" stroke-width=".4"/><path d="M10 8.800L9 11.800L12 11Z" fill="#e9d6b0"/></svg>
<svg class="abs" style="left:597px;top:824px" width="20" height="20" viewBox="0 0 20 20"><ellipse cx="10" cy="5" rx="6.500" ry="2.300" fill="none" stroke="#4b4f55" stroke-width="1.700" transform="rotate(-8 10 5)"/><ellipse cx="10" cy="9" rx="6.500" ry="2.300" fill="none" stroke="#4b4f55" stroke-width="1.700" transform="rotate(-8 10 9)"/><ellipse cx="10" cy="13" rx="6.500" ry="2.300" fill="none" stroke="#4b4f55" stroke-width="1.700" transform="rotate(-8 10 13)"/><ellipse cx="10" cy="16.5" rx="6.500" ry="2.300" fill="none" stroke="#4b4f55" stroke-width="1.700" transform="rotate(-8 10 16.5)"/></svg>
<svg class="abs" style="left:621px;top:824px" width="20" height="20" viewBox="0 0 20 20"><rect x="2.300" y="2.300" width="15.500" height="15.500" fill="url(#skf)" stroke="#111" stroke-width="1.200"/><path d="M5.600 4.500V15H15.500" stroke="#111" stroke-width="1.300" fill="none"/><path d="M6 14.600L10.500 10" stroke="#6a5a48" stroke-width="1.200"/><path d="M10 8.800L16 2.300L18.300 4.300L12 11Z" fill="#f7c21f" stroke="#b8860b" stroke-width=".4"/><path d="M10 8.800L9 11.800L12 11Z" fill="#e9d6b0"/></svg>
<svg class="abs" style="left:645px;top:824px" width="20" height="20" viewBox="0 0 20 20"><ellipse cx="10" cy="5" rx="6.500" ry="2.300" fill="none" stroke="#4b4f55" stroke-width="1.700" transform="rotate(-8 10 5)"/><ellipse cx="10" cy="9" rx="6.500" ry="2.300" fill="none" stroke="#4b4f55" stroke-width="1.700" transform="rotate(-8 10 9)"/><ellipse cx="10" cy="13" rx="6.500" ry="2.300" fill="none" stroke="#4b4f55" stroke-width="1.700" transform="rotate(-8 10 13)"/><ellipse cx="10" cy="16.5" rx="6.500" ry="2.300" fill="none" stroke="#4b4f55" stroke-width="1.700" transform="rotate(-8 10 16.5)"/></svg>
<svg class="abs" style="left:669px;top:824px" width="20" height="20" viewBox="0 0 20 20"><rect x="2.300" y="2.300" width="15.500" height="15.500" fill="url(#skf)" stroke="#111" stroke-width="1.200"/><path d="M5.600 4.500V15H15.500" stroke="#111" stroke-width="1.300" fill="none"/><path d="M6 14.600L10.500 10" stroke="#6a5a48" stroke-width="1.200"/><path d="M10 8.800L16 2.300L18.300 4.300L12 11Z" fill="#f7c21f" stroke="#b8860b" stroke-width=".4"/><path d="M10 8.800L9 11.800L12 11Z" fill="#e9d6b0"/></svg>
<svg class="abs" style="left:693px;top:824px" width="20" height="20" viewBox="0 0 20 20"><path d="M3.500 5.500L6 2.500H13L10.800 5.500Z" fill="url(#blt)" stroke="#4a5a78" stroke-width=".6"/><path d="M10.800 5.500L13 2.500V15L10.800 18Z" fill="#5f86c2" stroke="#4a5a78" stroke-width=".6"/><rect x="3.500" y="5.500" width="7.300" height="12.500" fill="url(#bl)" stroke="#4a5a78" stroke-width=".6"/><path d="M3.500 15.500h7.300V18H3.500z" fill="#e1e5ec" stroke="#4a5a78" stroke-width=".4"/><path d="M16.800 17V4M15 7.500L16.800 3.500L18.600 7.500" stroke="#333" stroke-width="1" fill="none"/></svg>
<svg class="abs" style="left:717px;top:824px" width="20" height="20" viewBox="0 0 20 20"><rect x="2.300" y="2.300" width="15.500" height="15.500" fill="url(#skf)" stroke="#111" stroke-width="1.200"/><path d="M5.600 4.500V15H15.500" stroke="#111" stroke-width="1.300" fill="none"/><path d="M6 14.600L10.500 10" stroke="#6a5a48" stroke-width="1.200"/><path d="M10 8.800L16 2.300L18.300 4.300L12 11Z" fill="#f7c21f" stroke="#b8860b" stroke-width=".4"/><path d="M10 8.800L9 11.800L12 11Z" fill="#e9d6b0"/></svg>
<svg class="abs" style="left:741px;top:824px" width="20" height="20" viewBox="0 0 20 20"><path d="M4 3L15 8V19L4 14Z" fill="url(#bl)" stroke="#4a5a78" stroke-width=".7"/><path d="M4 3L6 2L17 7L15 8Z" fill="#dfe7f3" stroke="#4a5a78" stroke-width=".5"/><path d="M15 8L17 7V18L15 19Z" fill="#b9c2d2" stroke="#4a5a78" stroke-width=".5"/><path d="M4 9Q7 7 9.500 11Q12 15 15 13" fill="none" stroke="#d8341c" stroke-width="1.100"/></svg>
<svg class="abs" style="left:765px;top:824px" width="20" height="20" viewBox="0 0 20 20"><path d="M4 3L15 8V19L4 14Z" fill="url(#bl)" stroke="#4a5a78" stroke-width=".7"/><path d="M4 3L6 2L17 7L15 8Z" fill="#dfe7f3" stroke="#4a5a78" stroke-width=".5"/><path d="M15 8L17 7V18L15 19Z" fill="#b9c2d2" stroke="#4a5a78" stroke-width=".5"/><path d="M4 9Q7 7 9.500 11Q12 15 15 13" fill="none" stroke="#d8341c" stroke-width="1.100"/></svg>
<svg class="abs" style="left:789px;top:824px" width="20" height="20" viewBox="0 0 20 20"><path d="M4 3L15 8V19L4 14Z" fill="url(#bl)" stroke="#4a5a78" stroke-width=".7"/><path d="M4 3L6 2L17 7L15 8Z" fill="#dfe7f3" stroke="#4a5a78" stroke-width=".5"/><path d="M15 8L17 7V18L15 19Z" fill="#b9c2d2" stroke="#4a5a78" stroke-width=".5"/><path d="M4 9Q7 7 9.500 11Q12 15 15 13" fill="none" stroke="#d8341c" stroke-width="1.100"/></svg>
<svg class="abs" style="left:813px;top:824px" width="20" height="20" viewBox="0 0 20 20"><path d="M4 3L15 8V19L4 14Z" fill="url(#bl)" stroke="#4a5a78" stroke-width=".7"/><path d="M4 3L6 2L17 7L15 8Z" fill="#dfe7f3" stroke="#4a5a78" stroke-width=".5"/><path d="M15 8L17 7V18L15 19Z" fill="#b9c2d2" stroke="#4a5a78" stroke-width=".5"/><path d="M4 9Q7 7 9.500 11Q12 15 15 13" fill="none" stroke="#d8341c" stroke-width="1.100"/></svg>
<svg class="abs" style="left:837px;top:824px" width="20" height="20" viewBox="0 0 20 20"><path d="M4 3L15 8V19L4 14Z" fill="url(#bl)" stroke="#4a5a78" stroke-width=".7"/><path d="M4 3L6 2L17 7L15 8Z" fill="#dfe7f3" stroke="#4a5a78" stroke-width=".5"/><path d="M15 8L17 7V18L15 19Z" fill="#b9c2d2" stroke="#4a5a78" stroke-width=".5"/><path d="M4 9Q7 7 9.500 11Q12 15 15 13" fill="none" stroke="#d8341c" stroke-width="1.100"/></svg>
<svg class="abs" style="left:861px;top:824px" width="20" height="20" viewBox="0 0 20 20"><rect x="2.300" y="2.300" width="15.500" height="15.500" fill="url(#skf)" stroke="#111" stroke-width="1.200"/><path d="M5.600 4.500V15H15.500" stroke="#111" stroke-width="1.300" fill="none"/><path d="M6 14.600L10.500 10" stroke="#6a5a48" stroke-width="1.200"/><path d="M10 8.800L16 2.300L18.300 4.300L12 11Z" fill="#f7c21f" stroke="#b8860b" stroke-width=".4"/><path d="M10 8.800L9 11.800L12 11Z" fill="#e9d6b0"/></svg>
<svg class="abs" style="left:885px;top:824px" width="20" height="20" viewBox="0 0 20 20"><path d="M3.500 5.500L6 2.500H13L10.800 5.500Z" fill="url(#blt)" stroke="#4a5a78" stroke-width=".6"/><path d="M10.800 5.500L13 2.500V15L10.800 18Z" fill="#5f86c2" stroke="#4a5a78" stroke-width=".6"/><rect x="3.500" y="5.500" width="7.300" height="12.500" fill="url(#bl)" stroke="#4a5a78" stroke-width=".6"/><path d="M3.500 15.500h7.300V18H3.500z" fill="#e1e5ec" stroke="#4a5a78" stroke-width=".4"/><path d="M16.800 17V4M15 7.500L16.800 3.500L18.600 7.500" stroke="#333" stroke-width="1" fill="none"/></svg>
<svg class="abs" style="left:909px;top:824px" width="20" height="20" viewBox="0 0 20 20"><rect x="2.300" y="2.300" width="15.500" height="15.500" fill="url(#skf)" stroke="#111" stroke-width="1.200"/><path d="M5.600 4.500V15H15.500" stroke="#111" stroke-width="1.300" fill="none"/><path d="M6 14.600L10.500 10" stroke="#6a5a48" stroke-width="1.200"/><path d="M10 8.800L16 2.300L18.300 4.300L12 11Z" fill="#f7c21f" stroke="#b8860b" stroke-width=".4"/><path d="M10 8.800L9 11.800L12 11Z" fill="#e9d6b0"/></svg>
<svg class="abs" style="left:933px;top:824px" width="20" height="20" viewBox="0 0 20 20"><path d="M3.500 5.500L6 2.500H13L10.800 5.500Z" fill="url(#blt)" stroke="#4a5a78" stroke-width=".6"/><path d="M10.800 5.500L13 2.500V15L10.800 18Z" fill="#5f86c2" stroke="#4a5a78" stroke-width=".6"/><rect x="3.500" y="5.500" width="7.300" height="12.500" fill="url(#bl)" stroke="#4a5a78" stroke-width=".6"/><path d="M3.500 15.500h7.300V18H3.500z" fill="#e1e5ec" stroke="#4a5a78" stroke-width=".4"/><path d="M16.800 17V4M15 7.500L16.800 3.500L18.600 7.500" stroke="#333" stroke-width="1" fill="none"/></svg>
<svg class="abs" style="left:957px;top:824px" width="20" height="20" viewBox="0 0 20 20"><path d="M2 7L6 3H9.500Q7.500 7 9.500 9.500Z" fill="url(#gyt)" stroke="#444" stroke-width=".6"/><path d="M9.500 3Q17 3.500 18 10V15L15 18V12Q14 8 8 7.500Q7.500 5 9.500 3Z" fill="url(#bl)" stroke="#4a5a78" stroke-width=".6"/><path d="M2 7H8Q14 8 15 12V18H2Z" fill="url(#gy)" stroke="#444" stroke-width=".6"/></svg>
<svg class="abs" style="left:981px;top:824px" width="20" height="20" viewBox="0 0 20 20"><rect x="2.300" y="2.300" width="15.500" height="15.500" fill="url(#skf)" stroke="#111" stroke-width="1.200"/><path d="M5.600 4.500V15H15.500" stroke="#111" stroke-width="1.300" fill="none"/><path d="M6 14.600L10.500 10" stroke="#6a5a48" stroke-width="1.200"/><path d="M10 8.800L16 2.300L18.300 4.300L12 11Z" fill="#f7c21f" stroke="#b8860b" stroke-width=".4"/><path d="M10 8.800L9 11.800L12 11Z" fill="#e9d6b0"/></svg>
<svg class="abs" style="left:1005px;top:824px" width="20" height="20" viewBox="0 0 20 20"><path d="M3.500 5.500L6 2.500H13L10.800 5.500Z" fill="url(#blt)" stroke="#4a5a78" stroke-width=".6"/><path d="M10.800 5.500L13 2.500V15L10.800 18Z" fill="#5f86c2" stroke="#4a5a78" stroke-width=".6"/><rect x="3.500" y="5.500" width="7.300" height="12.500" fill="url(#bl)" stroke="#4a5a78" stroke-width=".6"/><path d="M3.500 15.500h7.300V18H3.500z" fill="#e1e5ec" stroke="#4a5a78" stroke-width=".4"/><path d="M16.800 17V4M15 7.500L16.800 3.500L18.600 7.500" stroke="#333" stroke-width="1" fill="none"/></svg>
<svg class="abs" style="left:1029px;top:824px" width="20" height="20" viewBox="0 0 20 20"><ellipse cx="10" cy="5" rx="6.500" ry="2.300" fill="none" stroke="#4b4f55" stroke-width="1.700" transform="rotate(-8 10 5)"/><ellipse cx="10" cy="9" rx="6.500" ry="2.300" fill="none" stroke="#4b4f55" stroke-width="1.700" transform="rotate(-8 10 9)"/><ellipse cx="10" cy="13" rx="6.500" ry="2.300" fill="none" stroke="#4b4f55" stroke-width="1.700" transform="rotate(-8 10 13)"/><ellipse cx="10" cy="16.5" rx="6.500" ry="2.300" fill="none" stroke="#4b4f55" stroke-width="1.700" transform="rotate(-8 10 16.5)"/></svg>
<svg class="abs" style="left:1053px;top:824px" width="20" height="20" viewBox="0 0 20 20"><rect x="2.500" y="2" width="6.500" height="7" rx="2" fill="url(#cyl)" stroke="#555" stroke-width=".8"/><rect x="11" y="10" width="7" height="8" rx="2.500" fill="url(#cyl)" stroke="#555" stroke-width=".8"/><path d="M4.500 10.500V14.500H8.500M7 12.500L9.500 14.500L7 16.500" stroke="#1a62c8" stroke-width="1.400" fill="none"/></svg>
<svg class="abs" style="left:1077px;top:824px" width="20" height="20" viewBox="0 0 20 20"><g transform="translate(1 1.500) scale(.6)"><path d="M15 1L20.500 8H17V11.800H13V8H9.500Z" fill="#444" transform="rotate(0 15 15)"/><path d="M15 1L20.500 8H17V11.800H13V8H9.500Z" fill="#444" transform="rotate(90 15 15)"/><path d="M15 1L20.500 8H17V11.800H13V8H9.500Z" fill="#444" transform="rotate(180 15 15)"/><path d="M15 1L20.500 8H17V11.800H13V8H9.500Z" fill="#444" transform="rotate(270 15 15)"/><rect x="12.700" y="12.700" width="4.600" height="4.600" fill="#ececec" stroke="#4a4a4a" stroke-width="1.300"/></g></svg>
<svg class="abs" style="left:1101px;top:824px" width="20" height="20" viewBox="0 0 20 20"><rect x="2.500" y="2" width="6.500" height="7" rx="2" fill="url(#cyl)" stroke="#555" stroke-width=".8"/><rect x="11" y="10" width="7" height="8" rx="2.500" fill="url(#cyl)" stroke="#555" stroke-width=".8"/><path d="M4.500 10.500V14.500H8.500M7 12.500L9.500 14.500L7 16.500" stroke="#1a62c8" stroke-width="1.400" fill="none"/></svg>
<svg class="abs" style="left:1125px;top:824px" width="20" height="20" viewBox="0 0 20 20"><g transform="translate(1 1.500) scale(.6)"><path d="M15 1L20.500 8H17V11.800H13V8H9.500Z" fill="#444" transform="rotate(0 15 15)"/><path d="M15 1L20.500 8H17V11.800H13V8H9.500Z" fill="#444" transform="rotate(90 15 15)"/><path d="M15 1L20.500 8H17V11.800H13V8H9.500Z" fill="#444" transform="rotate(180 15 15)"/><path d="M15 1L20.500 8H17V11.800H13V8H9.500Z" fill="#444" transform="rotate(270 15 15)"/><rect x="12.700" y="12.700" width="4.600" height="4.600" fill="#ececec" stroke="#4a4a4a" stroke-width="1.300"/></g></svg>
<svg class="abs" style="left:1149px;top:824px" width="20" height="20" viewBox="0 0 20 20"><g transform="translate(1 1.500) scale(.6)"><path d="M15 1L20.500 8H17V11.800H13V8H9.500Z" fill="#444" transform="rotate(0 15 15)"/><path d="M15 1L20.500 8H17V11.800H13V8H9.500Z" fill="#444" transform="rotate(90 15 15)"/><path d="M15 1L20.500 8H17V11.800H13V8H9.500Z" fill="#444" transform="rotate(180 15 15)"/><path d="M15 1L20.500 8H17V11.800H13V8H9.500Z" fill="#444" transform="rotate(270 15 15)"/><rect x="12.700" y="12.700" width="4.600" height="4.600" fill="#ececec" stroke="#4a4a4a" stroke-width="1.300"/></g></svg>
<svg class="abs" style="left:1173px;top:824px" width="20" height="20" viewBox="0 0 20 20"><rect x="2.500" y="2" width="6.500" height="7" rx="2" fill="url(#cyl)" stroke="#555" stroke-width=".8"/><rect x="11" y="10" width="7" height="8" rx="2.500" fill="url(#cyl)" stroke="#555" stroke-width=".8"/><path d="M4.500 10.500V14.500H8.500M7 12.500L9.500 14.500L7 16.500" stroke="#1a62c8" stroke-width="1.400" fill="none"/></svg>
<svg class="abs" style="left:1197px;top:824px" width="20" height="20" viewBox="0 0 20 20"><g transform="translate(1 1.500) scale(.6)"><path d="M15 1L20.500 8H17V11.800H13V8H9.500Z" fill="#444" transform="rotate(0 15 15)"/><path d="M15 1L20.500 8H17V11.800H13V8H9.500Z" fill="#444" transform="rotate(90 15 15)"/><path d="M15 1L20.500 8H17V11.800H13V8H9.500Z" fill="#444" transform="rotate(180 15 15)"/><path d="M15 1L20.500 8H17V11.800H13V8H9.500Z" fill="#444" transform="rotate(270 15 15)"/><rect x="12.700" y="12.700" width="4.600" height="4.600" fill="#ececec" stroke="#4a4a4a" stroke-width="1.300"/></g></svg>
<svg class="abs" style="left:1221px;top:824px" width="20" height="20" viewBox="0 0 20 20"><rect x="2.300" y="2.300" width="15.500" height="15.500" fill="url(#skf)" stroke="#111" stroke-width="1.200"/><path d="M5.600 4.500V15H15.500" stroke="#111" stroke-width="1.300" fill="none"/><path d="M6 14.600L10.500 10" stroke="#6a5a48" stroke-width="1.200"/><path d="M10 8.800L16 2.300L18.300 4.300L12 11Z" fill="#f7c21f" stroke="#b8860b" stroke-width=".4"/><path d="M10 8.800L9 11.800L12 11Z" fill="#e9d6b0"/></svg>
<svg class="abs" style="left:1245px;top:824px" width="20" height="20" viewBox="0 0 20 20"><path d="M4 3L15 8V19L4 14Z" fill="url(#bl)" stroke="#4a5a78" stroke-width=".7"/><path d="M4 3L6 2L17 7L15 8Z" fill="#dfe7f3" stroke="#4a5a78" stroke-width=".5"/><path d="M15 8L17 7V18L15 19Z" fill="#b9c2d2" stroke="#4a5a78" stroke-width=".5"/><path d="M4 9Q7 7 9.500 11Q12 15 15 13" fill="none" stroke="#d8341c" stroke-width="1.100"/></svg>
<svg class="abs" style="left:1269px;top:824px" width="20" height="20" viewBox="0 0 20 20"><path d="M4 3L15 8V19L4 14Z" fill="url(#bl)" stroke="#4a5a78" stroke-width=".7"/><path d="M4 3L6 2L17 7L15 8Z" fill="#dfe7f3" stroke="#4a5a78" stroke-width=".5"/><path d="M15 8L17 7V18L15 19Z" fill="#b9c2d2" stroke="#4a5a78" stroke-width=".5"/><path d="M4 9Q7 7 9.500 11Q12 15 15 13" fill="none" stroke="#d8341c" stroke-width="1.100"/></svg>
<svg class="abs" style="left:1293px;top:824px" width="20" height="20" viewBox="0 0 20 20"><path d="M2 6.5L5.5 3H18L14.5 6.5Z" fill="url(#blt)" stroke="#4a5a78" stroke-width=".7"/><path d="M14.5 6.5L18 3V14.5L14.5 18Z" fill="#5f86c2" stroke="#4a5a78" stroke-width=".7"/><rect x="2" y="6.5" width="12.5" height="11.5" fill="url(#bl)" stroke="#4a5a78" stroke-width=".7"/><circle cx="8.500" cy="12" r="4" fill="#111"/><path d="M10.300 10.800A2.200 2.200 0 1 0 10.300 13.200" stroke="#dfe7f3" stroke-width="1" fill="none"/></svg>
<svg class="abs" style="left:1317px;top:824px" width="20" height="20" viewBox="0 0 20 20"><path d="M2 6.5L5.5 3H18L14.5 6.5Z" fill="url(#blt)" stroke="#4a5a78" stroke-width=".7"/><path d="M14.5 6.5L18 3V14.5L14.5 18Z" fill="#5f86c2" stroke="#4a5a78" stroke-width=".7"/><rect x="2" y="6.5" width="12.5" height="11.5" fill="url(#bl)" stroke="#4a5a78" stroke-width=".7"/><circle cx="8.500" cy="12" r="4" fill="#111"/><path d="M10.300 10.800A2.200 2.200 0 1 0 10.300 13.200" stroke="#dfe7f3" stroke-width="1" fill="none"/></svg>
<svg class="abs" style="left:1341px;top:824px" width="20" height="20" viewBox="0 0 20 20"><path d="M2 6.5L5.5 3H18L14.5 6.5Z" fill="url(#blt)" stroke="#4a5a78" stroke-width=".7"/><path d="M14.5 6.5L18 3V14.5L14.5 18Z" fill="#5f86c2" stroke="#4a5a78" stroke-width=".7"/><rect x="2" y="6.5" width="12.5" height="11.5" fill="url(#bl)" stroke="#4a5a78" stroke-width=".7"/><circle cx="8.500" cy="12" r="4" fill="#111"/><path d="M10.300 10.800A2.200 2.200 0 1 0 10.300 13.200" stroke="#dfe7f3" stroke-width="1" fill="none"/></svg>
<svg class="abs" style="left:130px;top:844px" width="1240" height="10" viewBox="130 844 1240 10"><path d="M135 851H139M141 851H144M146 851H1354" stroke="#c6c6c6" stroke-width="1.800" fill="none"/><path d="M152.5 845V851M176.5 845V851M200.5 845V851M224.5 845V851M248.5 845V851M272.5 845V851M296.5 845V851M320.5 845V851M344.5 845V851M368.5 845V851M392.5 845V851M416.5 845V851M440.5 845V851M464.5 845V851M488.5 845V851M512.5 845V851M536.5 845V851M560.5 845V851M584.5 845V851M608.5 845V851M632.5 845V851M656.5 845V851M680.5 845V851M704.5 845V851M728.5 845V851M752.5 845V851M776.5 845V851M800.5 845V851M824.5 845V851M848.5 845V851M872.5 845V851M896.5 845V851M920.5 845V851M944.5 845V851M968.5 845V851M992.5 845V851M1016.5 845V851M1040.5 845V851M1064.5 845V851M1088.5 845V851M1112.5 845V851M1136.5 845V851M1160.5 845V851M1184.5 845V851M1208.5 845V851M1232.5 845V851M1256.5 845V851M1280.5 845V851M1304.5 845V851M1328.5 845V851M1352.5 845V851" stroke="#c6c6c6" stroke-width="1.700" fill="none"/></svg>
<svg class="abs" style="left:1355px;top:819px" width="18" height="36" viewBox="0 0 18 36"><path d="M1 1H17V4L10 10H8L1 4Z" fill="#555"/><rect x="8.200" y="8" width="1.600" height="27" fill="#555"/></svg>
<div class="abs" style="left:1401px;top:811px;width:20px;height:7px;background:#d2d2d2;border-radius:3.500px"></div>
<svg class="abs" style="left:1393.5px;top:829.5px" width="17" height="17" viewBox="0 0 17 17"><g transform="translate(8.500 8.500)"><rect x="-1.700" y="-8.300" width="3.400" height="4" fill="#444" transform="rotate(0)"/><rect x="-1.700" y="-8.300" width="3.400" height="4" fill="#444" transform="rotate(45)"/><rect x="-1.700" y="-8.300" width="3.400" height="4" fill="#444" transform="rotate(90)"/><rect x="-1.700" y="-8.300" width="3.400" height="4" fill="#444" transform="rotate(135)"/><rect x="-1.700" y="-8.300" width="3.400" height="4" fill="#444" transform="rotate(180)"/><rect x="-1.700" y="-8.300" width="3.400" height="4" fill="#444" transform="rotate(225)"/><rect x="-1.700" y="-8.300" width="3.400" height="4" fill="#444" transform="rotate(270)"/><rect x="-1.700" y="-8.300" width="3.400" height="4" fill="#444" transform="rotate(315)"/><circle r="5.600" fill="#444"/><circle r="2.600" fill="#f8f8f8"/></g></svg>
<svg class="abs" style="left:1113px;top:357px" width="26" height="30" viewBox="0 0 26 30"><circle cx="12" cy="12" r="10" fill="#fdfdfd" fill-opacity=".6" stroke="#222" stroke-width="1.100"/><path d="M11 13.500V27L14.200 24L16.500 29L18.500 28L16.300 23.200H20.500Z" fill="#111" stroke="#fff" stroke-width="1"/></svg>
</body></html>
